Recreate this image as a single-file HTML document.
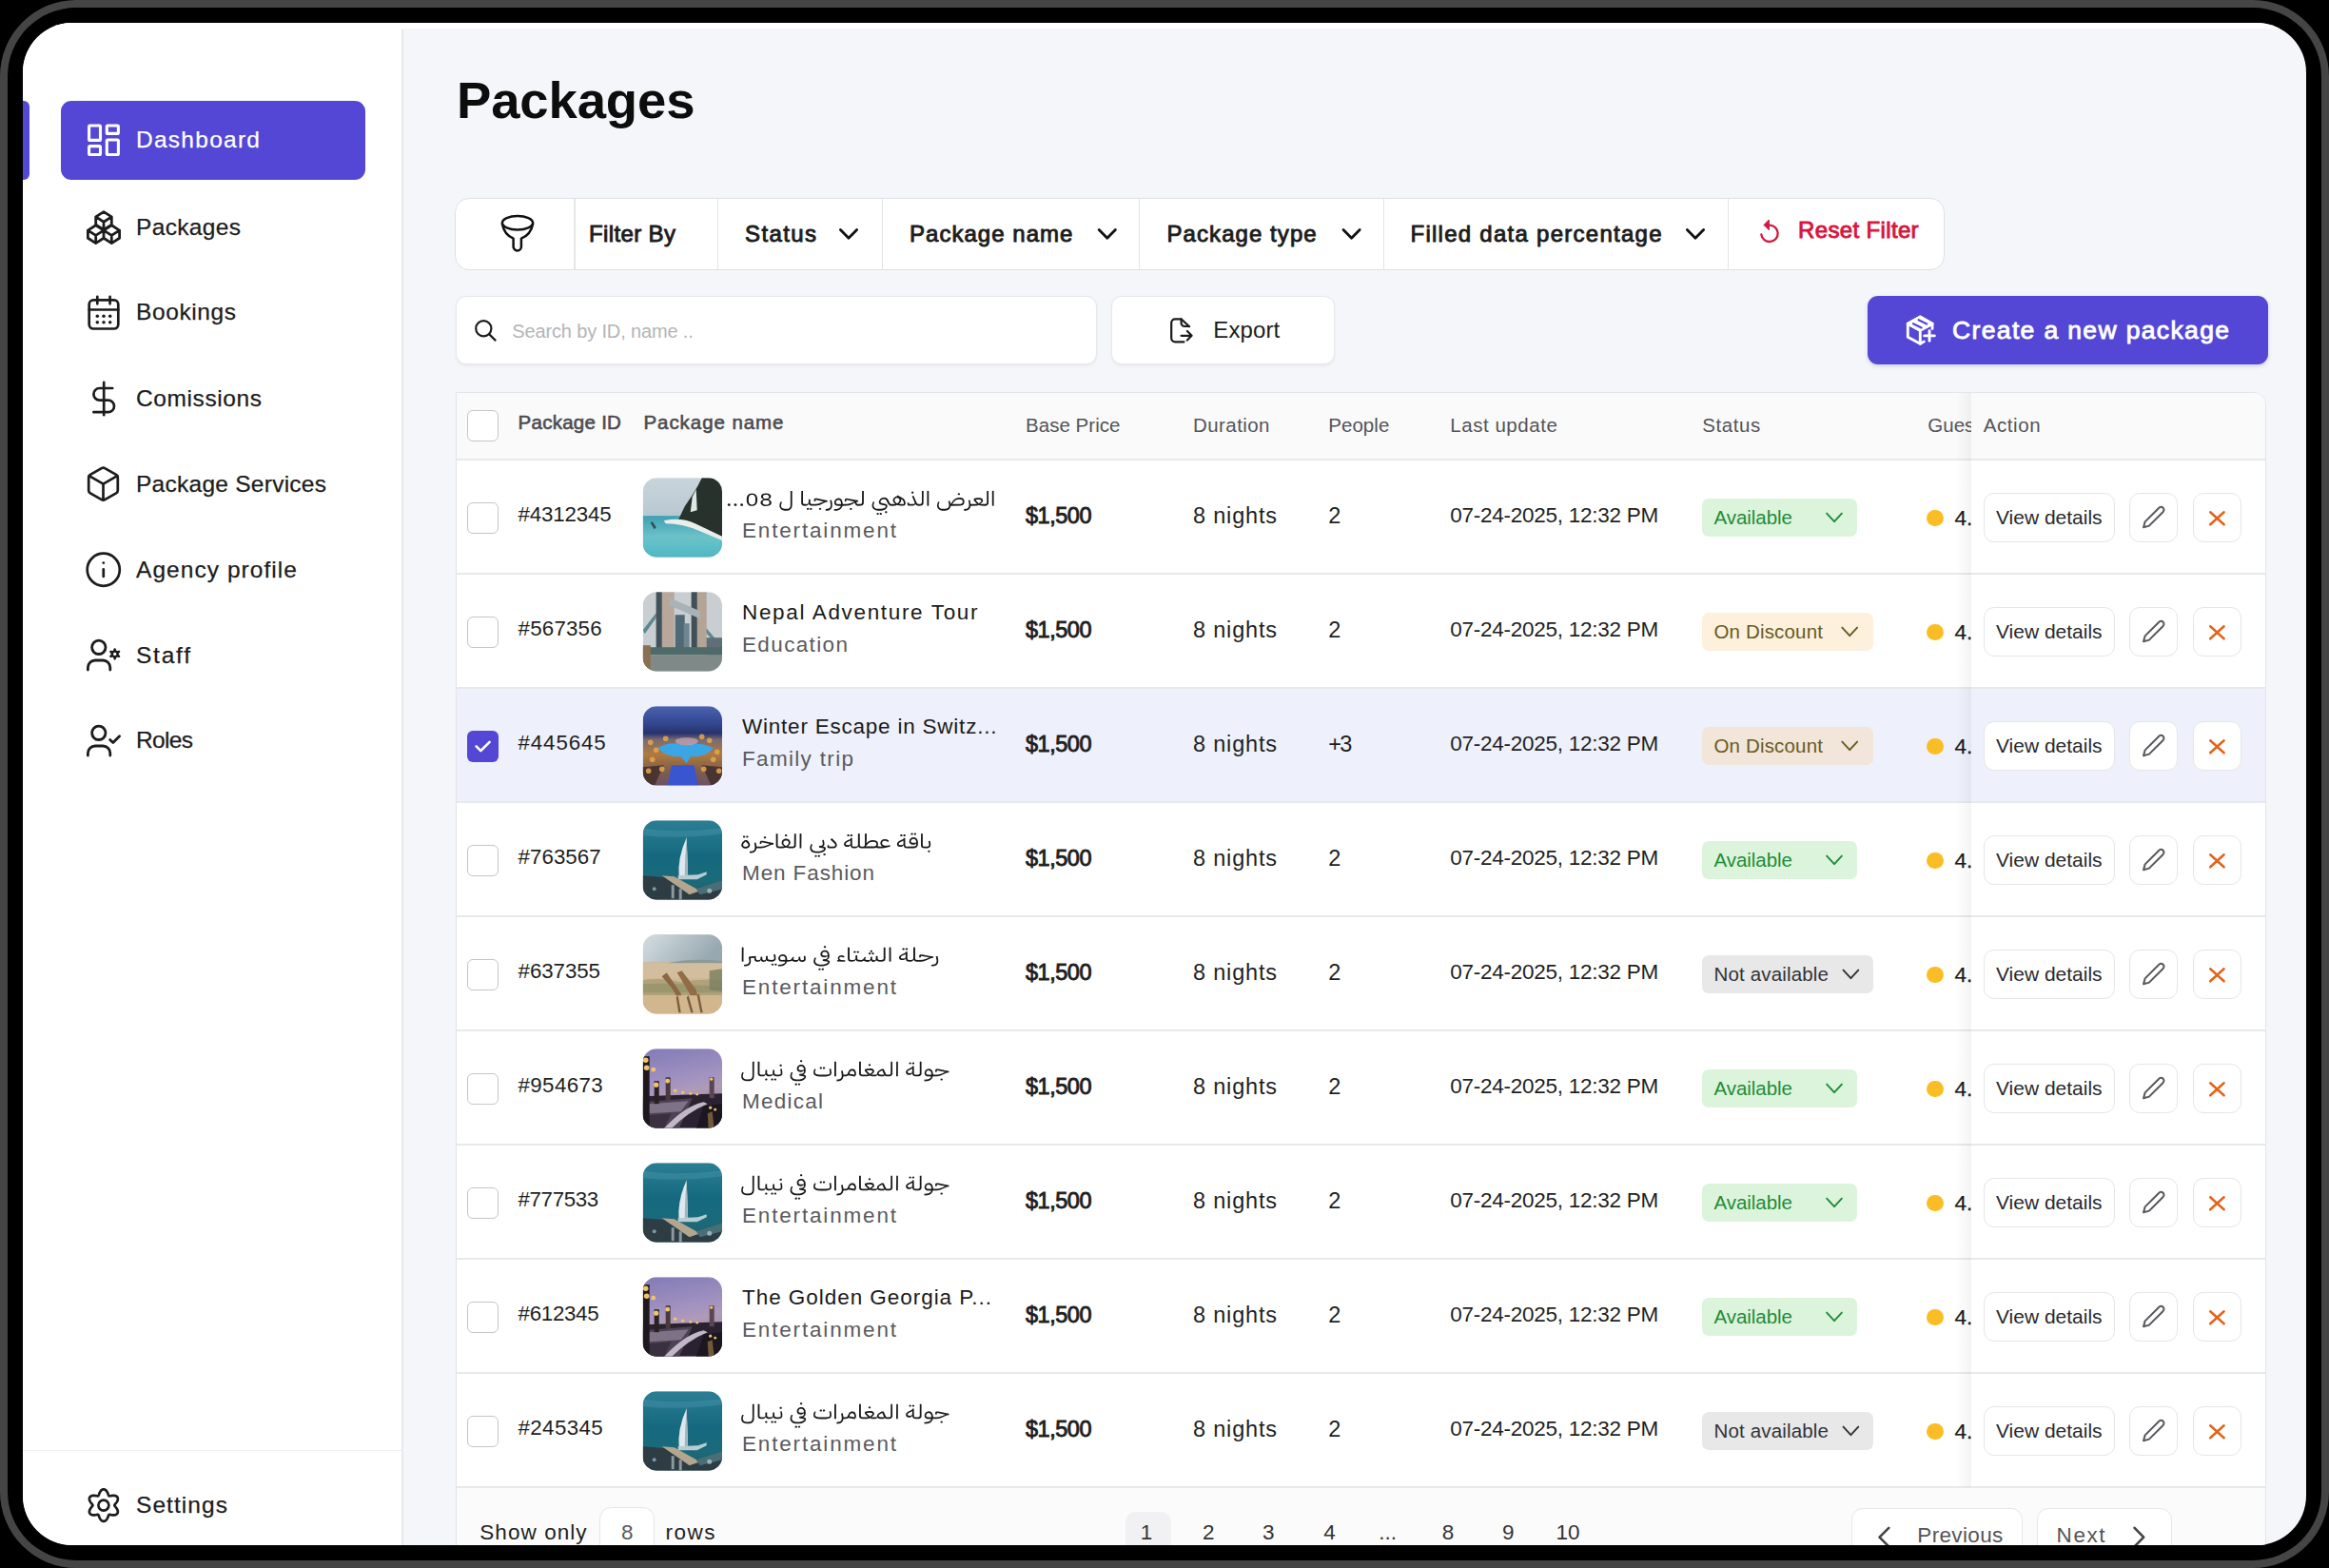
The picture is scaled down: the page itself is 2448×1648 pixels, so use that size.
<!DOCTYPE html>
<html><head><meta charset="utf-8"><title>Packages</title><style>
html,body{margin:0;padding:0;width:2448px;height:1648px;overflow:hidden;background:#000}
*{box-sizing:border-box}
#dev{position:absolute;left:0;top:0;width:2448px;height:1648px;border-radius:80px;background:#454545}
#bez{position:absolute;left:8px;top:8px;width:2432px;height:1632px;border-radius:72px;background:#000}
#scr{position:absolute;left:24px;top:24px;width:2400px;height:1600px;border-radius:52px;overflow:hidden;background:#f5f6fa;font-family:'Liberation Sans', sans-serif}
#in{position:absolute;left:-24px;top:-24px;width:2448px;height:1648px}
#ov{position:absolute;left:0;top:0;width:2448px;height:1648px}
</style></head><body><div id="dev"></div><div id="bez"></div><div id="scr"><div id="in">
<div style="position:absolute;left:24px;top:24px;width:398px;height:1600px;background:#fff"></div>
<div style="position:absolute;left:24px;top:24px;width:2400px;height:6px;background:#fff"></div>
<div style="position:absolute;left:422.3px;top:30.5px;width:1.8px;height:1600px;background:#e7e8eb"></div>
<div style="position:absolute;left:24px;top:105.5px;width:6.6px;height:83.5px;background:#5447d6;border-radius:0 6px 6px 0"></div>
<div style="position:absolute;left:64.3px;top:105.5px;width:319.5px;height:83.5px;background:#5447d6;border-radius:11px"></div>
<div style="position:absolute;left:24px;top:1523.8px;width:398px;height:1.5px;background:#eeeff1"></div>
<div style="position:absolute;left:478px;top:207.8px;width:1566px;height:76px;background:#fff;border:1.5px solid #dfe0e3;border-radius:15px"></div>
<div style="position:absolute;left:603.4px;top:209px;width:1.2px;height:73.5px;background:#e4e5e8"></div>
<div style="position:absolute;left:753.8px;top:209px;width:1.2px;height:73.5px;background:#e4e5e8"></div>
<div style="position:absolute;left:927.1px;top:209px;width:1.2px;height:73.5px;background:#e4e5e8"></div>
<div style="position:absolute;left:1197.2px;top:209px;width:1.2px;height:73.5px;background:#e4e5e8"></div>
<div style="position:absolute;left:1453.6000000000001px;top:209px;width:1.2px;height:73.5px;background:#e4e5e8"></div>
<div style="position:absolute;left:1815.7px;top:209px;width:1.2px;height:73.5px;background:#e4e5e8"></div>
<div style="position:absolute;left:478.5px;top:311.2px;width:674px;height:71.8px;background:#fff;border:1.5px solid #e7e8eb;border-radius:11px;box-shadow:0 1.5px 3px rgba(0,0,0,0.05)"></div>
<div style="position:absolute;left:1168px;top:311.2px;width:235px;height:71.8px;background:#fff;border:1.5px solid #e7e8eb;border-radius:11px;box-shadow:0 1.5px 3px rgba(0,0,0,0.05)"></div>
<div style="position:absolute;left:1962.5px;top:310.8px;width:421.5px;height:72.6px;background:#5447d6;border-radius:11px;box-shadow:0 2px 4px rgba(60,50,180,0.18)"></div>
<div style="position:absolute;left:478.5px;top:411.5px;width:1903.8000000000002px;height:1300px;background:#fff;border:1.6px solid #e4e5e8;border-radius:0 13px 0 0"></div>
<div style="position:absolute;left:480px;top:413px;width:1900.8000000000002px;height:69.8px;background:#fafafb;border-radius:0 12px 0 0"></div>
<div style="position:absolute;left:480px;top:482.3px;width:1900.8000000000002px;height:1.5px;background:#e8e9ec"></div>
<div style="position:absolute;left:491px;top:431px;width:33px;height:33px;border-radius:6px;background:#fff;border:1.8px solid #c6c6c9"></div>
<div style="position:absolute;left:480px;top:602.3px;width:1900.8000000000002px;height:1.5px;background:#e8e9ec"></div>
<div style="position:absolute;left:491px;top:527.8px;width:33px;height:33px;border-radius:6px;background:#fff;border:1.8px solid #c6c6c9"></div>
<div style="position:absolute;left:1789.2px;top:524px;width:162.8px;height:39.5px;border-radius:7px;background:#dcf4dc"></div>
<div style="position:absolute;left:2025px;top:535.8px;width:17.6px;height:17.6px;border-radius:50%;background:#fbbd26"></div>
<div style="position:absolute;left:480px;top:722.3px;width:1900.8000000000002px;height:1.5px;background:#e8e9ec"></div>
<div style="position:absolute;left:491px;top:647.8px;width:33px;height:33px;border-radius:6px;background:#fff;border:1.8px solid #c6c6c9"></div>
<div style="position:absolute;left:1789.2px;top:644px;width:179.8px;height:39.5px;border-radius:7px;background:rgba(248,205,138,0.3)"></div>
<div style="position:absolute;left:2025px;top:655.8px;width:17.6px;height:17.6px;border-radius:50%;background:#fbbd26"></div>
<div style="position:absolute;left:480px;top:723.8px;width:1900.8000000000002px;height:119px;background:#eef1fb"></div>
<div style="position:absolute;left:480px;top:842.3px;width:1900.8000000000002px;height:1.5px;background:#e8e9ec"></div>
<div style="position:absolute;left:491px;top:767.8px;width:33px;height:33px;border-radius:6px;background:#5447d6"></div>
<div style="position:absolute;left:1789.2px;top:764px;width:179.8px;height:39.5px;border-radius:7px;background:rgba(248,205,138,0.3)"></div>
<div style="position:absolute;left:2025px;top:775.8px;width:17.6px;height:17.6px;border-radius:50%;background:#fbbd26"></div>
<div style="position:absolute;left:480px;top:962.3px;width:1900.8000000000002px;height:1.5px;background:#e8e9ec"></div>
<div style="position:absolute;left:491px;top:887.8px;width:33px;height:33px;border-radius:6px;background:#fff;border:1.8px solid #c6c6c9"></div>
<div style="position:absolute;left:1789.2px;top:884px;width:162.8px;height:39.5px;border-radius:7px;background:#dcf4dc"></div>
<div style="position:absolute;left:2025px;top:895.8px;width:17.6px;height:17.6px;border-radius:50%;background:#fbbd26"></div>
<div style="position:absolute;left:480px;top:1082.3px;width:1900.8000000000002px;height:1.5px;background:#e8e9ec"></div>
<div style="position:absolute;left:491px;top:1007.8px;width:33px;height:33px;border-radius:6px;background:#fff;border:1.8px solid #c6c6c9"></div>
<div style="position:absolute;left:1789.2px;top:1004px;width:179.6px;height:39.5px;border-radius:7px;background:#e8e8e9"></div>
<div style="position:absolute;left:2025px;top:1015.8px;width:17.6px;height:17.6px;border-radius:50%;background:#fbbd26"></div>
<div style="position:absolute;left:480px;top:1202.3px;width:1900.8000000000002px;height:1.5px;background:#e8e9ec"></div>
<div style="position:absolute;left:491px;top:1127.8px;width:33px;height:33px;border-radius:6px;background:#fff;border:1.8px solid #c6c6c9"></div>
<div style="position:absolute;left:1789.2px;top:1124px;width:162.8px;height:39.5px;border-radius:7px;background:#dcf4dc"></div>
<div style="position:absolute;left:2025px;top:1135.8px;width:17.6px;height:17.6px;border-radius:50%;background:#fbbd26"></div>
<div style="position:absolute;left:480px;top:1322.3px;width:1900.8000000000002px;height:1.5px;background:#e8e9ec"></div>
<div style="position:absolute;left:491px;top:1247.8px;width:33px;height:33px;border-radius:6px;background:#fff;border:1.8px solid #c6c6c9"></div>
<div style="position:absolute;left:1789.2px;top:1244px;width:162.8px;height:39.5px;border-radius:7px;background:#dcf4dc"></div>
<div style="position:absolute;left:2025px;top:1255.8px;width:17.6px;height:17.6px;border-radius:50%;background:#fbbd26"></div>
<div style="position:absolute;left:480px;top:1442.3px;width:1900.8000000000002px;height:1.5px;background:#e8e9ec"></div>
<div style="position:absolute;left:491px;top:1367.8px;width:33px;height:33px;border-radius:6px;background:#fff;border:1.8px solid #c6c6c9"></div>
<div style="position:absolute;left:1789.2px;top:1364px;width:162.8px;height:39.5px;border-radius:7px;background:#dcf4dc"></div>
<div style="position:absolute;left:2025px;top:1375.8px;width:17.6px;height:17.6px;border-radius:50%;background:#fbbd26"></div>
<div style="position:absolute;left:480px;top:1562.3px;width:1900.8000000000002px;height:1.5px;background:#e8e9ec"></div>
<div style="position:absolute;left:491px;top:1487.8px;width:33px;height:33px;border-radius:6px;background:#fff;border:1.8px solid #c6c6c9"></div>
<div style="position:absolute;left:1789.2px;top:1484px;width:179.6px;height:39.5px;border-radius:7px;background:#e8e8e9"></div>
<div style="position:absolute;left:2025px;top:1495.8px;width:17.6px;height:17.6px;border-radius:50%;background:#fbbd26"></div>
<div style="position:absolute;left:2056px;top:413px;width:15.5px;height:1150px;background:linear-gradient(to right,rgba(0,0,0,0),rgba(0,0,0,0.03) 70%,rgba(0,0,0,0.045))"></div>
<div style="position:absolute;left:2084.7px;top:518.2px;width:138px;height:52px;border-radius:11px;background:#fff;border:1.5px solid #e5e6e9"></div>
<div style="position:absolute;left:2238.2px;top:518.2px;width:51px;height:52px;border-radius:11px;background:#fff;border:1.5px solid #e5e6e9"></div>
<div style="position:absolute;left:2304.5px;top:518.2px;width:51.7px;height:52px;border-radius:11px;background:#fff;border:1.5px solid #e5e6e9"></div>
<div style="position:absolute;left:2084.7px;top:638.2px;width:138px;height:52px;border-radius:11px;background:#fff;border:1.5px solid #e5e6e9"></div>
<div style="position:absolute;left:2238.2px;top:638.2px;width:51px;height:52px;border-radius:11px;background:#fff;border:1.5px solid #e5e6e9"></div>
<div style="position:absolute;left:2304.5px;top:638.2px;width:51.7px;height:52px;border-radius:11px;background:#fff;border:1.5px solid #e5e6e9"></div>
<div style="position:absolute;left:2084.7px;top:758.2px;width:138px;height:52px;border-radius:11px;background:#fff;border:1.5px solid #e5e6e9"></div>
<div style="position:absolute;left:2238.2px;top:758.2px;width:51px;height:52px;border-radius:11px;background:#fff;border:1.5px solid #e5e6e9"></div>
<div style="position:absolute;left:2304.5px;top:758.2px;width:51.7px;height:52px;border-radius:11px;background:#fff;border:1.5px solid #e5e6e9"></div>
<div style="position:absolute;left:2084.7px;top:878.2px;width:138px;height:52px;border-radius:11px;background:#fff;border:1.5px solid #e5e6e9"></div>
<div style="position:absolute;left:2238.2px;top:878.2px;width:51px;height:52px;border-radius:11px;background:#fff;border:1.5px solid #e5e6e9"></div>
<div style="position:absolute;left:2304.5px;top:878.2px;width:51.7px;height:52px;border-radius:11px;background:#fff;border:1.5px solid #e5e6e9"></div>
<div style="position:absolute;left:2084.7px;top:998.2px;width:138px;height:52px;border-radius:11px;background:#fff;border:1.5px solid #e5e6e9"></div>
<div style="position:absolute;left:2238.2px;top:998.2px;width:51px;height:52px;border-radius:11px;background:#fff;border:1.5px solid #e5e6e9"></div>
<div style="position:absolute;left:2304.5px;top:998.2px;width:51.7px;height:52px;border-radius:11px;background:#fff;border:1.5px solid #e5e6e9"></div>
<div style="position:absolute;left:2084.7px;top:1118.2px;width:138px;height:52px;border-radius:11px;background:#fff;border:1.5px solid #e5e6e9"></div>
<div style="position:absolute;left:2238.2px;top:1118.2px;width:51px;height:52px;border-radius:11px;background:#fff;border:1.5px solid #e5e6e9"></div>
<div style="position:absolute;left:2304.5px;top:1118.2px;width:51.7px;height:52px;border-radius:11px;background:#fff;border:1.5px solid #e5e6e9"></div>
<div style="position:absolute;left:2084.7px;top:1238.2px;width:138px;height:52px;border-radius:11px;background:#fff;border:1.5px solid #e5e6e9"></div>
<div style="position:absolute;left:2238.2px;top:1238.2px;width:51px;height:52px;border-radius:11px;background:#fff;border:1.5px solid #e5e6e9"></div>
<div style="position:absolute;left:2304.5px;top:1238.2px;width:51.7px;height:52px;border-radius:11px;background:#fff;border:1.5px solid #e5e6e9"></div>
<div style="position:absolute;left:2084.7px;top:1358.2px;width:138px;height:52px;border-radius:11px;background:#fff;border:1.5px solid #e5e6e9"></div>
<div style="position:absolute;left:2238.2px;top:1358.2px;width:51px;height:52px;border-radius:11px;background:#fff;border:1.5px solid #e5e6e9"></div>
<div style="position:absolute;left:2304.5px;top:1358.2px;width:51.7px;height:52px;border-radius:11px;background:#fff;border:1.5px solid #e5e6e9"></div>
<div style="position:absolute;left:2084.7px;top:1478.2px;width:138px;height:52px;border-radius:11px;background:#fff;border:1.5px solid #e5e6e9"></div>
<div style="position:absolute;left:2238.2px;top:1478.2px;width:51px;height:52px;border-radius:11px;background:#fff;border:1.5px solid #e5e6e9"></div>
<div style="position:absolute;left:2304.5px;top:1478.2px;width:51.7px;height:52px;border-radius:11px;background:#fff;border:1.5px solid #e5e6e9"></div>
<div style="position:absolute;left:480px;top:1563.5px;width:1900.8000000000002px;height:80px;background:#fbfbfc"></div>
<div style="position:absolute;left:630px;top:1584.3px;width:58px;height:60px;border-radius:12px;background:#fff;border:1.5px solid #e5e6e9"></div>
<div style="position:absolute;left:1182.7px;top:1588.7px;width:48.7px;height:60px;border-radius:11px;background:#f1f1f3"></div>
<div style="position:absolute;left:1945.9px;top:1584.7px;width:180px;height:60px;border-radius:12px;background:#fff;border:1.5px solid #e5e6e9"></div>
<div style="position:absolute;left:2141.2px;top:1584.7px;width:141.8px;height:60px;border-radius:12px;background:#fff;border:1.5px solid #e5e6e9"></div>
<svg id="ov" width="2448" height="1648" viewBox="0 0 2448 1648"><g fill="none" stroke-linecap="round" stroke-linejoin="round" stroke="#fff" stroke-width="3.1"><rect x="93.6" y="132" width="11.9" height="15.4" rx="1"/><rect x="112.3" y="132" width="12.1" height="8.4" rx="1"/><rect x="93.6" y="153.6" width="11.9" height="8.9" rx="1"/><rect x="112.3" y="147" width="12.1" height="15.5" rx="1"/></g>
<path fill="none" stroke-linecap="round" stroke-linejoin="round" stroke="#1c1c1c" stroke-width="2.8" d="M109 222.6 L117.3 227.9 L117.3 236.1 L109 241.39999999999998 L100.7 236.1 L100.7 227.9 Z M100.7 227.9 L109 233.2 L117.3 227.9 M109 233.2 V241.39999999999998 M100.7 236.8 L109.0 242.10000000000002 L109.0 250.3 L100.7 255.6 L92.4 250.3 L92.4 242.10000000000002 Z M92.4 242.10000000000002 L100.7 247.4 L109.0 242.10000000000002 M100.7 247.4 V255.6 M117.3 236.8 L125.6 242.10000000000002 L125.6 250.3 L117.3 255.6 L109.0 250.3 L109.0 242.10000000000002 Z M109.0 242.10000000000002 L117.3 247.4 L125.6 242.10000000000002 M117.3 247.4 V255.6"/>
<g fill="none" stroke-linecap="round" stroke-linejoin="round" stroke="#1c1c1c" stroke-width="2.7"><rect x="93.7" y="315.4" width="30.6" height="30.1" rx="4.5"/><path d="M102.3 311.8V319.3M115.6 311.8V319.3M93.7 325.5H124.3"/></g>
<circle cx="102.3" cy="332.2" r="1.75" fill="#1c1c1c"/>
<circle cx="102.3" cy="338.8" r="1.75" fill="#1c1c1c"/>
<circle cx="109" cy="332.2" r="1.75" fill="#1c1c1c"/>
<circle cx="109" cy="338.8" r="1.75" fill="#1c1c1c"/>
<circle cx="115.7" cy="332.2" r="1.75" fill="#1c1c1c"/>
<circle cx="115.7" cy="338.8" r="1.75" fill="#1c1c1c"/>
<g fill="none" stroke-linecap="round" stroke-linejoin="round" stroke="#1c1c1c" stroke-width="1.5" transform="translate(87.6 399) scale(1.8)"><line x1="12" x2="12" y1="1.6" y2="20.7"/><path d="M17 5H9.5a3.5 3.5 0 0 0 0 7h5a3.5 3.5 0 0 1 0 7H6"/></g>
<g fill="none" stroke-linecap="round" stroke-linejoin="round" stroke="#1c1c1c" stroke-width="1.6" transform="translate(88.1 488.2) scale(1.7)"><path d="M21 8a2 2 0 0 0-1-1.73l-7-4a2 2 0 0 0-2 0l-7 4A2 2 0 0 0 3 8v8a2 2 0 0 0 1 1.73l7 4a2 2 0 0 0 2 0l7-4A2 2 0 0 0 21 16Z"/><path d="m3.3 7 8.7 5 8.7-5"/><path d="M12 22V12"/></g>
<g fill="none" stroke-linecap="round" stroke-linejoin="round" stroke="#1c1c1c" stroke-width="1.6" transform="translate(88.3 578.3) scale(1.705)"><circle cx="12" cy="12" r="10"/><path d="M12 16.2v-4.4"/><path d="M12 7.8h.01"/></g>
<g fill="none" stroke-linecap="round" stroke-linejoin="round" stroke="#1c1c1c" stroke-width="2.8"><circle cx="103.8" cy="680.3" r="7.2"/><path d="M92.4 704 V701.6 a7.6 7.6 0 0 1 7.6-7.6 H108.2 a7.6 7.6 0 0 1 7.6 7.6 V704"/></g>
<path fill="#1c1c1c" fill-rule="evenodd" d="M120.70 681.10 L121.03 681.18 L121.33 681.39 L121.60 681.73 L121.82 682.13 L121.99 682.57 L122.13 682.98 L122.26 683.34 L122.38 683.62 L122.53 683.81 L122.70 683.94 L122.89 684.02 L123.13 684.05 L123.43 684.02 L123.81 683.95 L124.24 683.86 L124.70 683.80 L125.16 683.79 L125.59 683.85 L125.93 684.01 L126.16 684.25 L126.25 684.57 L126.22 684.94 L126.06 685.34 L125.82 685.74 L125.53 686.11 L125.24 686.43 L124.99 686.72 L124.81 686.97 L124.72 687.19 L124.70 687.40 L124.72 687.61 L124.81 687.83 L124.99 688.08 L125.24 688.37 L125.53 688.69 L125.82 689.06 L126.06 689.46 L126.22 689.86 L126.25 690.23 L126.16 690.55 L125.93 690.79 L125.59 690.95 L125.16 691.01 L124.70 691.00 L124.24 690.94 L123.81 690.85 L123.43 690.78 L123.13 690.75 L122.89 690.78 L122.70 690.86 L122.53 690.99 L122.38 691.18 L122.26 691.46 L122.13 691.82 L121.99 692.23 L121.82 692.67 L121.60 693.07 L121.33 693.41 L121.03 693.62 L120.70 693.70 L120.37 693.62 L120.07 693.41 L119.80 693.07 L119.58 692.67 L119.41 692.23 L119.27 691.82 L119.14 691.46 L119.02 691.18 L118.87 690.99 L118.70 690.86 L118.51 690.78 L118.27 690.75 L117.97 690.78 L117.59 690.85 L117.16 690.94 L116.70 691.00 L116.24 691.01 L115.81 690.95 L115.47 690.79 L115.24 690.55 L115.15 690.23 L115.18 689.86 L115.34 689.46 L115.58 689.06 L115.87 688.69 L116.16 688.37 L116.41 688.08 L116.59 687.83 L116.68 687.61 L116.70 687.40 L116.68 687.19 L116.59 686.97 L116.41 686.72 L116.16 686.43 L115.87 686.11 L115.58 685.74 L115.34 685.34 L115.18 684.94 L115.15 684.57 L115.24 684.25 L115.47 684.01 L115.81 683.85 L116.24 683.79 L116.70 683.80 L117.16 683.86 L117.59 683.95 L117.97 684.02 L118.27 684.05 L118.51 684.02 L118.70 683.94 L118.87 683.81 L119.02 683.62 L119.14 683.34 L119.27 682.98 L119.41 682.57 L119.58 682.13 L119.80 681.73 L120.07 681.39 L120.37 681.18Z M122.4 687.4 a1.7 1.7 0 1 0 -3.4 0 a1.7 1.7 0 1 0 3.4 0Z"/>
<g fill="none" stroke-linecap="round" stroke-linejoin="round" stroke="#1c1c1c" stroke-width="2.8"><circle cx="103.8" cy="770.3" r="7.2"/><path d="M92.4 794 V791.6 a7.6 7.6 0 0 1 7.6-7.6 H108.2 a7.6 7.6 0 0 1 7.6 7.6 V794"/><path d="M115.6 777.6 L118.8 780.6 L125.6 773.8"/></g>
<path fill="none" stroke-linecap="round" stroke-linejoin="round" stroke="#1c1c1c" stroke-width="2.7" d="M108.90 1565.30 L109.34 1565.33 L109.77 1565.43 L110.20 1565.59 L110.61 1565.81 L111.01 1566.08 L111.39 1566.41 L111.74 1566.78 L112.07 1567.19 L112.37 1567.63 L112.65 1568.09 L112.91 1568.57 L113.14 1569.06 L113.34 1569.55 L113.53 1570.03 L113.71 1570.49 L113.87 1570.93 L114.03 1571.34 L114.20 1571.70 L114.38 1572.00 L114.60 1572.23 L114.90 1572.30 L115.26 1572.31 L115.66 1572.27 L116.09 1572.21 L116.55 1572.13 L117.03 1572.05 L117.55 1571.98 L118.07 1571.91 L118.61 1571.87 L119.15 1571.85 L119.70 1571.85 L120.23 1571.90 L120.75 1571.98 L121.25 1572.10 L121.72 1572.26 L122.15 1572.47 L122.55 1572.72 L122.90 1573.01 L123.20 1573.34 L123.45 1573.70 L123.64 1574.10 L123.77 1574.52 L123.85 1574.97 L123.87 1575.44 L123.83 1575.92 L123.73 1576.41 L123.59 1576.90 L123.40 1577.39 L123.17 1577.87 L122.91 1578.35 L122.62 1578.81 L122.31 1579.25 L121.99 1579.67 L121.67 1580.08 L121.35 1580.46 L121.06 1580.82 L120.79 1581.16 L120.56 1581.49 L120.39 1581.80 L120.30 1582.10 L120.39 1582.40 L120.56 1582.71 L120.79 1583.04 L121.06 1583.38 L121.35 1583.74 L121.67 1584.12 L121.99 1584.53 L122.31 1584.95 L122.62 1585.39 L122.91 1585.85 L123.17 1586.33 L123.40 1586.81 L123.59 1587.30 L123.73 1587.79 L123.83 1588.28 L123.87 1588.76 L123.85 1589.23 L123.77 1589.68 L123.64 1590.10 L123.45 1590.50 L123.20 1590.86 L122.90 1591.19 L122.55 1591.48 L122.15 1591.73 L121.72 1591.94 L121.25 1592.10 L120.75 1592.22 L120.23 1592.30 L119.70 1592.35 L119.15 1592.35 L118.61 1592.33 L118.07 1592.29 L117.55 1592.22 L117.03 1592.15 L116.55 1592.07 L116.09 1591.99 L115.66 1591.93 L115.26 1591.89 L114.90 1591.90 L114.60 1591.97 L114.38 1592.20 L114.20 1592.50 L114.03 1592.86 L113.87 1593.27 L113.71 1593.71 L113.53 1594.17 L113.34 1594.65 L113.14 1595.14 L112.91 1595.63 L112.65 1596.11 L112.37 1596.57 L112.07 1597.01 L111.74 1597.42 L111.39 1597.79 L111.01 1598.12 L110.61 1598.39 L110.20 1598.61 L109.77 1598.77 L109.34 1598.87 L108.90 1598.90 L108.46 1598.87 L108.03 1598.77 L107.60 1598.61 L107.19 1598.39 L106.79 1598.12 L106.41 1597.79 L106.06 1597.42 L105.73 1597.01 L105.43 1596.57 L105.15 1596.11 L104.89 1595.63 L104.66 1595.14 L104.46 1594.65 L104.27 1594.17 L104.09 1593.71 L103.93 1593.27 L103.77 1592.86 L103.60 1592.50 L103.42 1592.20 L103.20 1591.97 L102.90 1591.90 L102.54 1591.89 L102.14 1591.93 L101.71 1591.99 L101.25 1592.07 L100.77 1592.15 L100.25 1592.22 L99.73 1592.29 L99.19 1592.33 L98.65 1592.35 L98.10 1592.35 L97.57 1592.30 L97.05 1592.22 L96.55 1592.10 L96.08 1591.94 L95.65 1591.73 L95.25 1591.48 L94.90 1591.19 L94.60 1590.86 L94.35 1590.50 L94.16 1590.10 L94.03 1589.68 L93.95 1589.23 L93.93 1588.76 L93.97 1588.28 L94.07 1587.79 L94.21 1587.30 L94.40 1586.81 L94.63 1586.33 L94.89 1585.85 L95.18 1585.39 L95.49 1584.95 L95.81 1584.53 L96.13 1584.12 L96.45 1583.74 L96.74 1583.38 L97.01 1583.04 L97.24 1582.71 L97.41 1582.40 L97.50 1582.10 L97.41 1581.80 L97.24 1581.49 L97.01 1581.16 L96.74 1580.82 L96.45 1580.46 L96.13 1580.08 L95.81 1579.67 L95.49 1579.25 L95.18 1578.81 L94.89 1578.35 L94.63 1577.87 L94.40 1577.39 L94.21 1576.90 L94.07 1576.41 L93.97 1575.92 L93.93 1575.44 L93.95 1574.97 L94.03 1574.52 L94.16 1574.10 L94.35 1573.70 L94.60 1573.34 L94.90 1573.01 L95.25 1572.72 L95.65 1572.47 L96.08 1572.26 L96.55 1572.10 L97.05 1571.98 L97.57 1571.90 L98.10 1571.85 L98.65 1571.85 L99.19 1571.87 L99.73 1571.91 L100.25 1571.98 L100.77 1572.05 L101.25 1572.13 L101.71 1572.21 L102.14 1572.27 L102.54 1572.31 L102.90 1572.30 L103.20 1572.23 L103.42 1572.00 L103.60 1571.70 L103.77 1571.34 L103.93 1570.93 L104.09 1570.49 L104.27 1570.03 L104.46 1569.55 L104.66 1569.06 L104.89 1568.57 L105.15 1568.09 L105.43 1567.63 L105.73 1567.19 L106.06 1566.78 L106.41 1566.41 L106.79 1566.08 L107.19 1565.81 L107.60 1565.59 L108.03 1565.43 L108.46 1565.33Z"/><circle cx="108.9" cy="1582.1" r="5.5" fill="none" stroke="#1c1c1c" stroke-width="2.7"/>
<g fill="none" stroke-linecap="round" stroke-linejoin="round" stroke="#111" stroke-width="2.5"><ellipse cx="544" cy="234.2" rx="16.1" ry="7.3"/><path d="M527.9 235.5 C529.5 243.5 534 248.5 539.6 250.6 V259.3 a4.15 4.15 0 0 0 8.3 0 V250.6 C553.5 248.5 558.5 243.5 560.1 235.5"/></g>
<path fill="none" stroke-linecap="round" stroke-linejoin="round" stroke="#111" stroke-width="2.8" d="M883.4 241.6 L892.0 250.3 L900.6 241.6"/>
<path fill="none" stroke-linecap="round" stroke-linejoin="round" stroke="#111" stroke-width="2.8" d="M1155.2 241.6 L1163.8 250.3 L1172.4 241.6"/>
<path fill="none" stroke-linecap="round" stroke-linejoin="round" stroke="#111" stroke-width="2.8" d="M1412 241.6 L1420.6 250.3 L1429.2 241.6"/>
<path fill="none" stroke-linecap="round" stroke-linejoin="round" stroke="#111" stroke-width="2.8" d="M1773.4 241.6 L1782.0 250.3 L1790.6000000000001 241.6"/>
<path fill="none" stroke-linecap="round" stroke-linejoin="round" stroke="#d01a40" stroke-width="2.3" d="M1851.3 246.3 A8.7 8.7 0 1 0 1859.6 236.6"/><path fill="#d01a40" stroke="#d01a40" stroke-width="1" stroke-linejoin="round" d="M1854 236.4 L1859.4 231 L1859.4 241.8Z"/>
<g fill="none" stroke-linecap="round" stroke-linejoin="round" stroke="#1c1c1c" stroke-width="2.2"><circle cx="508.3" cy="345.2" r="8.1"/><path d="M514.3 351.4 L520.6 357.6"/></g>
<g fill="none" stroke-linecap="round" stroke-linejoin="round" stroke="#1c1c1c" stroke-width="2.2"><path d="M1244.5 359.3 H1235.2 a4 4 0 0 1 -4 -4 V339.3 a4 4 0 0 1 4 -4 H1241.6 L1250 343.3"/><path d="M1241.6 335.3 V339.6 a3.4 3.4 0 0 0 3.4 3.4 H1250"/><path d="M1241.6 352.8 H1252.6 M1247.9 348 L1252.6 352.8 L1247.9 357.6"/></g>
<g fill="none" stroke-linecap="round" stroke-linejoin="round" stroke="#fff" stroke-width="2.9"><path d="M2031 345.5 V340.2 L2018.3 333 L2005.3 340.2 V354.2 L2018.3 361.2 L2022.3 359"/><path d="M2005.3 340.2 L2018.3 347.3 L2031 340.2 M2018.3 347.3 V361.2"/><path fill="#fff" d="M2018.3 333 L2031 340.2 L2018.3 347.3 L2005.3 340.2Z"/><path stroke="#5447d6" stroke-width="2.2" d="M2011 340.2 L2019.6 344.4 M2016.6 336.2 L2025.2 340.4"/><path d="M2028 347.6 V358.2 M2022.7 352.9 H2033.3"/></g>
<clipPath id="c0"><rect x="0" y="0" width="83.3" height="83.3" rx="14.5"/></clipPath><g transform="translate(675.7 502.2)" clip-path="url(#c0)"><defs><linearGradient id="bs" x1="0" y1="0" x2="0" y2="1"><stop offset="0" stop-color="#c9d5dc"/><stop offset="1" stop-color="#a5bac6"/></linearGradient><linearGradient id="bw" x1="0" y1="0" x2="0" y2="1"><stop offset="0" stop-color="#3f9fb0"/><stop offset="0.5" stop-color="#6cc2c9"/><stop offset="1" stop-color="#4db8c4"/></linearGradient></defs><rect width="84" height="84" fill="url(#bs)"/><rect y="40" width="84" height="44" fill="url(#bw)"/><path d="M36 47 L44 30 L52 18 L58 8 L62 0 L84 0 L84 64 L72 58 L55 50Z" fill="#26322b"/><path d="M22 45 Q40 41 55 48 L84 62 L84 66 L60 56 Q42 48 24 48Z" fill="#e9eeec"/><path d="M52 20 L56 12 L57 34 L50 36Z" fill="#dfe6e6"/><path d="M10 46 L14 52 L12 54 L8 47Z" fill="#2f4b55"/></g>
<path fill="#1a1a1a" fill-rule="nonzero" transform="translate(764.9 516.0) scale(1.0707 0.9284)" d="M58.50 22.32 55.50 22.30 53.50 21.63 52.37 20.75 51.47 19.50 50.93 17.75 50.90 15.75 51.17 14.25 52.00 12.11 53.27 12.50 52.42 15.50 52.41 17.25 52.93 18.75 54.00 19.77 55.50 20.26 58.25 20.29 59.50 20.08 60.75 19.16 61.33 18.00 61.58 16.00 61.59 0.00 63.00 -0.12 63.29 0.00 63.29 15.50 63.08 17.75 62.55 19.50 61.73 20.75 60.25 21.75 58.50 22.32ZM86.75 16.79 82.00 16.77 80.75 16.30 79.94 15.50 79.50 14.66 78.60 16.25 77.25 16.79 75.50 16.85 74.00 16.60 72.75 15.73 72.38 15.00 72.16 13.50 72.25 -0.10 73.87 0.00 73.87 13.25 73.96 14.00 74.50 14.63 75.00 14.83 77.50 14.87 78.25 14.75 79.00 14.25 79.36 13.25 79.50 9.34 80.99 9.50 81.19 14.00 81.75 14.57 82.75 14.86 86.25 14.84 88.25 14.56 91.25 13.57 94.36 12.00 86.50 10.07 86.30 10.25 86.25 11.84 84.75 11.94 84.79 9.50 85.24 8.75 85.75 8.41 87.75 8.40 94.00 10.03 97.87 10.75 97.75 12.58 96.00 12.61 90.50 15.78 89.25 16.28 86.75 16.79ZM107.25 22.25 104.50 22.38 104.41 20.50 107.00 20.35 109.00 19.76 110.50 18.41 111.11 17.00 106.75 16.65 106.00 16.27 105.24 15.50 104.67 14.25 104.68 12.00 105.18 10.50 106.25 9.15 107.28 8.50 108.75 8.18 110.00 8.43 110.96 9.00 111.84 10.00 112.32 11.00 113.00 14.88 116.50 14.83 118.25 14.59 121.25 13.61 124.47 12.00 116.50 10.06 116.25 12.00 115.00 12.00 114.82 11.75 115.00 9.26 115.75 8.50 116.75 8.27 125.50 10.33 127.75 10.58 127.99 10.75 127.91 12.50 126.25 12.75 126.62 14.25 127.50 14.84 130.75 14.73 131.65 14.00 131.87 13.00 131.88 0.00 133.60 0.00 133.56 13.50 133.33 14.75 132.50 16.04 130.75 16.82 128.00 16.84 126.75 16.61 125.50 15.74 124.75 13.42 121.50 15.33 119.25 16.32 116.50 16.83 112.75 16.88 111.80 19.25 110.50 20.83 109.25 21.64 107.25 22.25ZM189.50 16.80 187.25 16.87 185.75 16.54 184.98 16.00 184.25 14.91 183.40 16.25 182.25 16.83 177.75 16.82 177.07 16.50 176.43 15.75 176.34 13.25 177.91 13.25 178.00 14.84 182.25 14.88 183.50 14.46 183.55 13.25 181.01 6.25 181.01 6.00 182.50 5.42 185.43 13.25 186.00 14.18 187.00 14.88 189.25 14.79 190.00 14.40 190.36 14.00 190.59 12.75 190.59 0.00 192.00 -0.12 192.28 0.00 192.16 14.00 191.82 15.25 191.25 15.94 190.75 16.36 189.50 16.80ZM197.25 16.88 195.72 16.75 195.72 0.00 196.00 -0.14 197.41 0.00 197.41 16.75 197.25 16.88ZM234.00 22.27 232.00 22.33 231.92 20.75 232.00 20.47 234.00 20.32 235.25 19.84 236.58 18.25 236.92 15.75 236.81 13.75 236.25 10.75 236.50 10.51 237.75 10.31 237.86 10.50 238.50 14.82 244.75 14.85 241.65 10.75 241.65 9.00 242.50 8.45 244.25 7.92 246.25 7.76 248.00 7.92 249.90 9.00 250.36 9.75 250.59 11.00 250.03 12.75 247.81 14.75 252.50 14.86 253.25 14.73 253.97 14.25 254.28 13.75 254.38 12.75 254.38 0.00 256.00 -0.10 256.08 13.25 255.83 14.75 255.04 16.00 254.00 16.61 253.00 16.84 248.75 16.82 246.25 15.86 244.75 16.60 243.75 16.83 238.50 16.90 238.01 19.00 237.02 20.75 235.50 21.85 234.00 22.27ZM261.00 16.88 259.56 16.75 259.56 0.00 259.75 -0.14 261.22 0.00 261.22 16.75 261.00 16.88ZM182.00 2.86 181.00 2.88 180.43 2.50 180.39 1.25 180.75 0.85 181.50 0.67 182.33 1.00 182.56 2.00 182.00 2.86ZM227.50 4.60 226.50 4.64 225.90 4.25 225.87 3.00 226.25 2.58 227.00 2.42 227.80 2.75 228.02 3.75 227.50 4.60ZM25.00 17.02 22.75 17.03 21.25 16.58 20.50 16.08 19.14 14.00 18.61 11.75 18.65 7.75 19.15 5.75 19.66 4.75 20.25 3.94 21.50 3.15 23.75 2.68 26.25 3.19 27.43 4.00 28.50 5.75 29.10 8.25 29.08 11.75 28.30 14.50 26.90 16.25 25.00 17.02ZM39.25 17.04 36.25 17.11 34.50 16.58 33.00 15.39 32.40 14.25 32.24 13.00 32.63 11.50 34.00 10.11 35.29 9.50 33.50 8.29 32.94 7.50 32.68 6.25 32.92 5.00 34.00 3.63 35.50 2.93 37.50 2.68 39.75 2.96 41.25 3.66 42.35 5.25 42.45 6.25 42.08 7.75 41.00 8.86 39.88 9.50 41.25 10.15 42.55 11.50 42.87 12.50 42.84 14.00 42.30 15.25 41.50 16.07 39.25 17.04ZM24.27 15.50 26.00 14.79 26.81 13.50 27.12 12.00 27.14 8.00 26.80 6.25 26.25 5.35 25.00 4.44 23.75 4.25 22.25 4.65 21.00 6.00 20.54 8.00 20.50 11.00 20.71 13.00 21.42 14.50 22.75 15.36 24.27 15.50ZM38.28 8.75 39.75 8.26 40.36 7.50 40.51 6.25 40.25 5.29 39.75 4.75 38.75 4.37 37.50 4.25 35.50 4.69 34.72 5.75 34.68 7.00 34.94 7.75 36.00 8.59 38.28 8.75ZM150.75 22.29 147.25 22.33 146.00 22.07 144.25 21.35 142.68 20.00 141.96 18.50 141.66 16.50 141.92 14.50 142.75 12.15 144.08 12.50 143.41 14.50 143.17 16.25 143.43 17.75 144.23 19.00 145.25 19.80 146.00 20.08 148.00 20.33 150.25 20.29 152.00 20.05 153.75 19.40 154.81 18.50 155.23 17.00 154.75 16.68 149.75 15.33 148.67 14.25 148.40 12.50 148.91 10.50 149.89 9.00 151.50 7.72 153.50 7.26 154.75 7.41 156.00 7.99 157.11 9.25 159.23 14.00 159.75 14.58 160.50 14.88 164.48 14.75 162.95 13.00 162.40 11.75 162.22 10.50 162.41 9.25 163.36 7.50 164.75 6.46 165.75 6.14 166.75 4.83 171.00 7.44 172.55 8.75 173.54 10.00 174.33 12.00 174.57 14.75 173.25 16.79 169.25 16.80 166.25 15.85 164.25 16.61 161.00 16.88 159.25 16.60 158.20 15.75 157.41 14.50 155.88 11.00 154.97 9.75 153.25 9.17 151.75 9.63 150.88 10.25 150.14 11.25 149.92 12.50 150.17 13.25 152.00 14.06 155.50 14.93 156.52 16.00 156.72 17.25 156.25 19.21 154.75 20.89 153.00 21.78 150.75 22.29ZM213.75 22.28 210.75 22.34 209.50 22.08 208.25 21.61 206.47 20.00 205.67 18.00 205.57 16.50 205.93 14.00 206.75 12.11 207.93 12.50 207.18 15.00 207.08 16.25 207.21 17.50 207.94 19.00 209.50 20.08 213.75 20.33 215.00 20.03 216.00 19.50 217.07 18.00 217.33 15.75 216.59 11.75 216.75 11.43 218.12 11.25 218.75 14.61 219.00 14.62 221.75 10.35 223.25 8.92 224.75 7.96 226.75 7.48 228.50 7.49 230.50 8.20 231.54 9.25 232.27 11.25 232.22 13.25 231.64 15.00 230.50 16.10 228.25 16.83 219.00 16.88 218.36 19.25 217.60 20.50 216.25 21.55 213.75 22.28ZM166.52 14.00 167.50 13.17 168.35 12.00 168.66 10.75 168.56 9.50 168.00 8.50 167.25 7.96 165.50 7.90 164.83 8.25 164.20 9.00 163.90 10.00 163.92 11.25 164.44 12.50 165.10 13.25 166.25 14.14 166.52 14.00ZM172.92 14.75 172.83 13.00 172.28 11.25 171.38 10.00 170.25 9.06 170.33 10.50 170.04 12.00 169.07 13.75 168.06 14.75 172.92 14.75ZM228.64 14.75 229.75 14.34 230.37 13.75 230.66 12.75 230.60 11.25 230.31 10.50 229.75 9.96 227.75 9.42 225.50 9.64 223.75 10.49 222.13 12.25 220.50 14.75 228.64 14.75ZM246.61 14.00 248.80 12.00 249.02 11.25 248.75 10.50 248.00 9.98 246.25 9.68 244.00 9.92 243.25 10.25 246.25 13.89 246.61 14.00ZM111.25 14.75 111.08 12.50 110.56 11.25 110.00 10.62 109.25 10.19 108.50 10.13 107.50 10.37 106.97 10.75 106.38 11.75 106.18 12.75 106.40 14.00 106.75 14.43 107.50 14.84 111.25 14.75ZM38.71 15.50 40.00 15.07 40.80 14.00 40.88 12.25 40.38 11.25 39.50 10.64 37.50 10.38 35.75 10.62 34.80 11.25 34.45 11.75 34.25 13.00 34.45 14.25 34.75 14.65 35.75 15.33 36.75 15.58 38.71 15.50ZM98.25 22.27 96.08 22.25 96.14 20.50 99.00 20.06 99.82 19.50 100.59 18.50 101.05 16.75 101.08 15.50 100.37 10.75 100.50 10.55 101.75 10.31 102.04 10.75 102.55 14.25 102.57 17.00 102.31 18.50 101.50 20.25 100.75 21.11 99.75 21.83 98.25 22.27ZM1.75 17.09 0.52 17.00 -0.09 16.25 -0.07 15.00 0.75 14.23 1.75 14.23 2.57 15.00 2.60 16.25 2.25 16.85 1.75 17.09ZM8.00 17.09 6.77 17.00 6.16 16.25 6.18 15.00 7.00 14.23 8.00 14.23 8.82 15.00 8.85 16.25 8.50 16.85 8.00 17.09ZM14.25 17.09 13.02 17.00 12.41 16.25 12.43 15.00 13.25 14.23 14.25 14.23 15.07 15.00 15.10 16.25 14.75 16.85 14.25 17.09ZM79.25 21.36 78.50 21.46 77.70 21.00 77.62 20.00 78.00 19.40 78.75 19.25 79.54 19.50 79.81 20.00 79.81 20.75 79.25 21.36ZM82.25 21.35 81.50 21.47 80.67 21.00 80.60 20.00 81.00 19.38 81.75 19.26 82.50 19.51 82.81 20.50 82.25 21.35ZM91.25 21.38 90.25 21.38 89.75 20.96 89.65 20.00 90.00 19.42 91.00 19.28 91.75 19.75 91.85 20.75 91.25 21.38ZM121.50 21.34 120.75 21.48 119.89 21.00 119.81 20.00 120.25 19.37 121.25 19.31 121.87 19.75 121.94 20.75 121.50 21.34ZM156.00 25.03 155.00 25.10 154.42 24.75 154.36 23.50 154.79 23.00 155.75 22.90 156.29 23.25 156.53 24.00 156.35 24.75 156.00 25.03ZM148.00 26.83 147.25 27.00 146.41 26.75 146.13 25.75 146.50 24.92 147.25 24.75 148.08 25.00 148.37 26.00 148.00 26.83ZM151.00 26.80 150.25 27.00 149.39 26.75 149.11 25.75 149.50 24.90 150.25 24.75 151.05 25.00 151.35 26.00 151.00 26.80Z"/>
<path fill="none" stroke-linecap="round" stroke-linejoin="round" stroke="#1f8c37" stroke-width="1.9" d="M1920.1000000000001 539.6 L1928.0 548.2 L1935.9 539.6"/>
<clipPath id="c1"><rect x="0" y="0" width="83.3" height="83.3" rx="14.5"/></clipPath><g transform="translate(675.7 622.2)" clip-path="url(#c1)"><rect width="84" height="84" fill="#c9ced3"/><path d="M0 40 L20 14 L22 16 L2 44Z M60 30 L84 58 L84 62 L58 34Z" fill="#5b8a90"/><rect x="34" y="24" width="10" height="42" fill="#4f6a76"/><rect x="43" y="33" width="6" height="33" fill="#6f8590"/><rect x="66" y="48" width="18" height="20" fill="#5e6f78"/><rect x="14" y="0" width="19" height="82" fill="#b8a79a"/><rect x="14" y="0" width="6" height="62" fill="#41535c"/><rect x="51" y="0" width="16" height="82" fill="#b3a496"/><rect x="51" y="0" width="6" height="62" fill="#3f5058"/><path d="M28 6 L60 20 L60 28 L28 14Z" fill="#a9b2b5"/><rect x="0" y="58" width="84" height="8" fill="#4f6a6a"/><rect x="0" y="66" width="84" height="18" fill="#7f8a88"/><rect x="0" y="56" width="8" height="28" fill="#8a7050"/></g>
<path fill="none" stroke-linecap="round" stroke-linejoin="round" stroke="#6a5a22" stroke-width="1.9" d="M1936.3000000000002 659.6 L1944.2 668.2 L1952.1000000000001 659.6"/>
<path fill="none" stroke-linecap="round" stroke-linejoin="round" stroke="#fff" stroke-width="2.6" d="M500.6 784.4 L505.3 789.0999999999999 L514.6 779.8"/>
<clipPath id="c2"><rect x="0" y="0" width="83.3" height="83.3" rx="14.5"/></clipPath><g transform="translate(675.7 742.2)" clip-path="url(#c2)"><defs><linearGradient id="ns" x1="0" y1="0" x2="0" y2="1"><stop offset="0" stop-color="#4a62b2"/><stop offset="0.22" stop-color="#33468e"/><stop offset="0.34" stop-color="#26336e"/><stop offset="0.42" stop-color="#7a6a70"/><stop offset="0.6" stop-color="#b07a40"/><stop offset="0.8" stop-color="#80604a"/><stop offset="1" stop-color="#6a5068"/></linearGradient></defs><rect width="84" height="84" fill="url(#ns)"/><path d="M16 44 Q28 36 44 41 Q60 37 74 44 Q66 54 50 53 L46 60 L40 53 Q24 54 16 44Z" fill="#3aa6e6"/><ellipse cx="46" cy="37" rx="12" ry="4" fill="#c8a8b8" opacity="0.7"/><path d="M30 62 L54 62 L58 83 L26 83Z" fill="#3a55d0"/><path d="M0 64 L22 62 L12 84 L0 84Z" fill="#4a3430"/><path d="M84 64 L62 62 L72 84 L84 84Z" fill="#4a3430"/><circle cx="8" cy="38" r="2.8" fill="#e8a64a" opacity="0.85"/><circle cx="14" cy="46" r="2.8" fill="#e8a64a" opacity="0.85"/><circle cx="70" cy="36" r="2.8" fill="#e8a64a" opacity="0.85"/><circle cx="78" cy="48" r="2.8" fill="#e8a64a" opacity="0.85"/><circle cx="10" cy="56" r="2.8" fill="#e8a64a" opacity="0.85"/><circle cx="74" cy="56" r="2.8" fill="#e8a64a" opacity="0.85"/><circle cx="24" cy="34" r="2.8" fill="#e8a64a" opacity="0.85"/><circle cx="62" cy="32" r="2.8" fill="#e8a64a" opacity="0.85"/><circle cx="6" cy="68" r="2.8" fill="#e8a64a" opacity="0.85"/><circle cx="80" cy="68" r="2.8" fill="#e8a64a" opacity="0.85"/><circle cx="20" cy="66" r="2.8" fill="#e8a64a" opacity="0.85"/><circle cx="64" cy="66" r="2.8" fill="#e8a64a" opacity="0.85"/></g>
<path fill="none" stroke-linecap="round" stroke-linejoin="round" stroke="#6a5a22" stroke-width="1.9" d="M1936.3000000000002 779.6 L1944.2 788.2 L1952.1000000000001 779.6"/>
<clipPath id="c3"><rect x="0" y="0" width="83.3" height="83.3" rx="14.5"/></clipPath><g transform="translate(675.7 862.2)" clip-path="url(#c3)"><defs><linearGradient id="us" x1="0" y1="0" x2="0" y2="1"><stop offset="0" stop-color="#2b7e94"/><stop offset="0.45" stop-color="#15697f"/><stop offset="0.75" stop-color="#1a6a7a"/><stop offset="1" stop-color="#2a5a66"/></linearGradient></defs><rect width="84" height="84" fill="url(#us)"/><path d="M0 8 Q30 14 84 8 L84 14 Q40 20 0 16Z" fill="#4a94a8" opacity="0.45"/><path d="M46 18 L47.5 60 L38 60 Q36 40 46 18Z" fill="#dfe8ec"/><path d="M46 18 L47.5 60 L44 60 Q44 40 46 18Z" fill="#9fb8c0"/><path d="M37 58 L58 57 L67 54 L67 57 L57 62 L37 62Z" fill="#b8ccd2"/><path d="M0 58 L24 60 L56 76 L84 70 L84 84 L0 84Z" fill="#2e3c44"/><path d="M20 58 L33 59 L60 74 L49 78Z" fill="#b4a68e"/><path d="M56 72 L84 63 L84 72 L60 78Z" fill="#4a6e76"/><rect x="30" y="68" width="3" height="14" fill="#8a9aa0"/><rect x="38" y="72" width="3" height="12" fill="#8a9aa0"/><circle cx="70" cy="74" r="2.5" fill="#9ab0b8"/><circle cx="12" cy="72" r="2" fill="#7a9aa6"/></g>
<path fill="#1a1a1a" fill-rule="nonzero" transform="translate(779.3 875.5) scale(1.1056 0.9107)" d="M162.75 2.08 161.50 2.10 161.13 1.75 160.98 1.00 161.25 0.22 162.25 -0.07 163.00 0.26 163.21 1.25 162.75 2.08ZM165.75 2.07 164.50 2.11 164.11 1.75 163.94 1.00 164.25 0.17 165.25 -0.07 166.00 0.31 166.15 1.50 165.75 2.07ZM49.25 17.54 45.50 17.57 42.50 16.61 39.25 17.57 36.00 17.59 34.75 17.36 33.67 16.75 33.15 16.00 32.89 14.75 32.86 0.75 34.57 0.75 34.57 14.00 34.65 14.75 34.98 15.25 36.50 15.62 40.62 15.50 39.19 14.00 38.43 12.50 38.24 11.00 38.42 9.75 38.95 8.50 40.00 7.38 41.50 6.68 42.50 6.62 44.00 6.90 44.91 7.50 45.84 8.50 46.47 10.25 46.55 11.25 46.06 13.25 44.16 15.50 47.50 15.64 49.00 15.53 49.75 15.12 50.13 14.50 50.27 0.75 51.94 0.75 51.83 15.00 51.00 16.65 50.50 17.09 49.25 17.54ZM57.00 17.62 55.40 17.50 55.40 0.75 55.75 0.61 57.12 0.75 57.00 17.62ZM134.25 17.51 129.75 17.61 128.25 16.91 127.00 17.36 125.25 17.61 113.75 17.55 112.25 17.09 111.39 16.25 111.00 15.42 110.30 16.75 109.50 17.32 108.25 17.58 106.50 17.56 105.25 17.28 104.16 16.25 103.75 13.94 103.00 15.07 101.75 15.82 100.00 15.88 99.00 15.60 98.23 15.00 97.75 14.23 97.49 12.50 97.95 11.00 98.82 10.00 100.25 8.90 103.50 7.06 103.75 5.83 105.00 5.75 105.30 6.00 105.31 14.00 105.50 14.97 106.25 15.52 107.25 15.62 109.50 15.55 110.25 15.16 110.61 14.75 110.83 13.75 110.84 0.75 112.25 0.62 112.53 0.75 112.63 14.50 113.00 15.12 113.75 15.53 116.50 15.60 117.37 14.00 117.37 0.75 118.75 0.62 119.08 0.75 119.08 9.00 118.84 11.50 119.00 11.63 120.51 10.00 122.75 8.64 125.25 8.17 127.00 8.42 128.75 9.44 129.61 10.75 129.96 12.75 129.59 15.50 133.75 15.62 133.93 15.50 133.16 14.75 132.42 13.50 132.08 11.75 132.41 9.75 133.21 8.50 134.50 7.47 136.50 7.09 138.25 7.43 139.83 8.50 140.18 9.25 139.25 10.38 137.25 9.14 135.50 9.16 134.75 9.46 133.88 10.50 133.70 12.25 134.50 13.63 136.00 14.56 138.50 14.61 141.25 14.11 141.59 15.75 137.00 17.05 134.25 17.51ZM176.75 17.51 174.25 17.61 172.50 17.35 171.50 16.76 170.88 15.75 170.65 14.00 170.75 0.65 172.37 0.75 172.37 14.00 172.46 14.75 172.82 15.25 173.50 15.58 176.25 15.62 177.50 15.35 177.98 15.00 178.33 14.25 178.34 13.25 177.74 9.25 179.35 9.00 179.87 13.00 179.86 14.50 179.60 15.50 179.25 16.14 178.25 17.07 176.75 17.51ZM42.75 3.82 42.00 3.81 41.33 3.25 41.34 2.25 41.75 1.74 42.75 1.65 43.33 2.00 43.43 3.25 42.75 3.82ZM102.00 3.80 101.25 3.83 100.51 3.25 100.53 2.25 101.00 1.70 102.00 1.66 102.63 2.25 102.64 3.25 102.00 3.80ZM105.00 3.79 104.25 3.84 103.46 3.25 103.48 2.25 104.00 1.69 105.00 1.66 105.61 2.25 105.62 3.25 105.00 3.79ZM152.50 3.77 151.75 3.85 150.92 3.25 150.94 2.25 151.50 1.68 152.50 1.67 153.08 2.25 153.10 3.25 152.50 3.77ZM155.25 3.84 154.50 3.78 153.90 3.25 153.91 2.25 154.50 1.67 155.50 1.68 156.05 2.25 156.07 3.25 155.25 3.84ZM3.00 5.36 2.25 5.37 1.63 5.00 1.45 4.25 1.75 3.43 2.75 3.18 3.50 3.55 3.65 4.75 3.00 5.36ZM6.00 5.35 5.25 5.38 4.61 5.00 4.42 4.25 4.75 3.41 5.75 3.18 6.60 3.75 6.63 4.75 6.00 5.35ZM22.75 6.34 21.75 6.30 21.37 6.00 21.21 5.00 21.75 4.20 22.75 4.16 23.38 4.75 23.31 6.00 22.75 6.34ZM164.25 17.57 157.75 17.61 155.75 17.31 154.62 16.25 154.21 14.25 154.00 14.11 153.50 15.00 152.25 15.79 150.00 15.81 149.00 15.32 148.18 14.25 147.90 12.75 148.14 11.50 148.97 10.25 150.25 9.19 154.00 7.00 154.25 5.75 155.50 5.75 155.71 6.00 155.71 14.00 156.15 15.25 156.75 15.55 157.75 15.62 164.50 15.49 165.44 15.00 166.02 14.25 166.25 11.92 165.00 13.05 164.25 13.33 162.50 13.38 161.50 13.11 160.00 11.91 159.68 11.25 159.49 9.75 159.97 7.50 161.29 5.75 162.25 5.22 163.50 4.95 165.00 5.20 166.25 6.03 167.35 7.75 167.84 10.00 167.85 13.00 167.60 14.50 166.81 16.25 165.75 17.08 164.25 17.57ZM88.00 17.53 83.00 17.55 82.09 17.00 81.70 16.25 81.75 13.88 83.23 14.00 83.23 15.50 83.50 15.62 87.75 15.60 88.50 15.35 89.09 14.50 89.11 13.25 88.66 12.25 84.69 7.75 84.63 7.50 86.00 6.17 89.84 10.75 90.75 13.26 90.73 14.75 90.29 16.00 89.25 17.09 88.00 17.53ZM165.35 11.25 165.98 11.00 166.28 10.50 166.02 9.00 165.35 7.75 164.74 7.25 163.75 6.94 162.50 7.13 162.00 7.42 161.17 8.75 161.17 10.25 161.44 10.75 162.50 11.35 165.35 11.25ZM74.25 23.03 70.50 23.04 68.25 22.38 67.00 21.60 66.18 20.75 65.39 19.00 65.16 17.25 65.42 15.25 66.25 12.90 67.58 13.25 66.72 16.25 66.75 17.75 67.50 19.47 68.75 20.55 70.75 21.03 74.00 21.02 75.50 20.79 77.50 19.84 78.35 19.00 78.62 17.75 74.00 16.73 73.79 16.50 73.79 15.00 74.00 14.75 76.25 14.57 77.09 14.00 77.35 12.25 76.81 8.25 78.25 7.94 78.82 11.25 78.86 13.50 78.53 14.50 77.64 15.50 77.81 15.75 79.25 16.15 80.00 16.82 80.23 17.75 80.08 19.00 79.08 20.75 78.00 21.64 76.00 22.60 74.25 23.03ZM4.75 17.77 3.00 17.79 1.75 17.29 0.43 16.00 -0.04 14.75 -0.07 13.75 0.42 11.75 1.15 10.50 3.25 8.17 5.25 8.28 6.80 10.00 8.05 12.75 8.09 14.50 7.58 16.00 6.25 17.30 4.75 17.77ZM42.70 14.75 44.18 13.50 44.61 12.75 44.91 11.50 44.79 10.25 44.25 9.31 43.48 8.75 41.50 8.67 40.59 9.25 40.11 10.00 39.86 11.25 39.97 12.25 40.41 13.25 41.34 14.25 42.25 14.86 42.70 14.75ZM102.71 13.75 103.38 13.25 103.59 12.75 103.66 9.00 103.50 8.86 100.25 10.67 99.15 12.00 99.14 13.00 99.50 13.58 100.00 13.84 101.00 13.99 102.71 13.75ZM153.14 13.75 153.84 13.25 154.08 12.50 154.00 8.83 150.75 10.64 149.62 12.00 149.60 13.00 150.00 13.63 151.50 13.99 153.14 13.75ZM9.75 23.04 7.83 23.00 7.83 21.50 8.00 21.17 10.75 20.81 11.57 20.25 12.34 19.25 12.84 16.50 12.25 11.30 13.50 11.06 13.72 11.25 14.50 15.62 18.75 15.60 21.00 15.31 24.00 14.32 27.11 12.75 19.25 10.82 19.05 11.00 19.00 12.59 17.50 12.69 17.54 10.25 17.99 9.50 18.50 9.16 20.50 9.15 26.75 10.78 30.62 11.50 30.50 13.33 28.75 13.36 22.50 16.85 19.25 17.57 14.50 17.62 13.79 20.00 12.88 21.50 11.50 22.53 9.75 23.04ZM4.87 15.75 5.75 15.35 6.28 14.75 6.52 13.50 6.09 12.25 4.00 9.85 1.90 12.25 1.57 14.00 2.00 15.00 2.75 15.61 3.75 15.88 4.87 15.75ZM126.31 15.50 127.50 15.04 128.05 14.50 128.35 13.50 128.33 12.25 128.10 11.50 127.45 10.75 126.75 10.37 125.50 10.17 123.00 10.44 121.50 11.17 120.17 12.50 118.15 15.50 126.31 15.50ZM179.00 22.03 178.25 22.25 177.33 21.75 177.15 21.00 177.50 20.20 178.25 20.00 179.11 20.25 179.39 21.25 179.00 22.03ZM79.50 25.78 78.50 25.85 77.92 25.50 77.86 24.25 78.29 23.75 79.25 23.65 79.79 24.00 80.03 24.75 79.85 25.50 79.50 25.78ZM71.50 27.58 70.75 27.75 69.91 27.50 69.63 26.50 70.00 25.67 70.75 25.50 71.58 25.75 71.87 26.75 71.50 27.58ZM74.50 27.55 73.75 27.75 72.89 27.50 72.61 26.50 73.00 25.65 73.75 25.50 74.55 25.75 74.85 26.75 74.50 27.55Z"/>
<path fill="none" stroke-linecap="round" stroke-linejoin="round" stroke="#1f8c37" stroke-width="1.9" d="M1920.1000000000001 899.6 L1928.0 908.2 L1935.9 899.6"/>
<clipPath id="c4"><rect x="0" y="0" width="83.3" height="83.3" rx="14.5"/></clipPath><g transform="translate(675.7 982.2)" clip-path="url(#c4)"><defs><linearGradient id="gs" x1="0" y1="0" x2="1" y2="0.3"><stop offset="0" stop-color="#d4dfe3"/><stop offset="1" stop-color="#98a8b0"/></linearGradient></defs><rect width="84" height="84" fill="#d0b794"/><rect width="84" height="29" fill="url(#gs)"/><path d="M22 31 Q50 24 84 28 L84 31Z" fill="#8e9a98"/><rect y="30" width="84" height="16" fill="#d2bd9e"/><path d="M0 48 Q20 45 40 50 Q60 46 84 48 L84 64 L0 64Z" fill="#b0a27a"/><path d="M0 52 Q30 50 84 55 L84 61 L0 61Z" fill="#8f8d66" opacity="0.6"/><path d="M70 38 L84 36 L84 60 L70 58Z" fill="#7a8060" opacity="0.8"/><path d="M20 44 L25 40 L40 62 L45 80 L40 80 L36 66 L31 57Z" fill="#8a6844"/><path d="M36 40 L41 38 L56 58 L61 80 L56 80 L50 64 L45 55Z" fill="#926c46"/><rect y="64" width="84" height="20" fill="#d2b68e"/><path d="M37 64 L40 82 L37.5 82 L35 66Z M48 64 L53 82 L50.5 82 L46 66Z M59 62 L63 82 L60.5 82 L57 64Z" fill="#7d5d40"/></g>
<path fill="#1a1a1a" fill-rule="nonzero" transform="translate(779.8 994.4) scale(1.1274 0.8870)" d="M77.75 2.04 77.00 2.04 76.37 1.50 76.33 0.50 76.75 -0.09 78.00 -0.09 78.36 0.25 78.38 1.50 77.75 2.04ZM1.50 18.32 -0.14 18.25 0.00 1.36 1.57 1.50 1.50 18.32ZM123.50 18.55 122.00 18.59 121.25 18.28 120.49 17.50 120.00 16.41 119.00 18.10 117.50 18.61 115.75 18.34 113.50 17.17 112.25 18.04 111.25 18.30 108.50 18.25 107.29 17.75 106.00 16.21 105.25 17.65 104.00 18.26 101.75 18.33 100.00 17.84 99.14 17.00 98.73 15.00 98.72 1.50 100.41 1.50 100.41 14.75 100.64 15.75 101.00 16.11 101.75 16.35 104.00 16.38 104.75 16.28 105.50 15.84 105.85 15.25 105.92 14.50 105.93 11.00 107.25 10.83 107.58 11.00 107.65 15.25 108.00 15.84 108.75 16.28 111.50 16.38 112.50 16.00 113.02 15.50 114.50 12.71 115.68 13.25 115.72 13.50 114.66 15.50 114.83 15.75 116.50 16.54 118.75 16.54 119.50 15.96 119.81 15.25 119.87 12.75 121.25 12.62 121.45 12.75 121.45 14.50 121.74 16.00 122.25 16.55 123.25 16.67 124.25 16.50 124.79 15.75 124.95 12.00 125.25 11.75 126.25 11.75 126.59 12.00 126.67 15.25 127.25 16.00 128.00 16.32 130.00 16.38 131.00 16.23 131.75 15.72 132.03 15.25 132.13 14.25 132.13 1.50 133.75 1.40 133.85 14.25 133.37 16.75 132.75 17.54 131.75 18.11 128.75 18.37 126.50 17.87 125.72 17.25 125.25 16.41 124.59 18.00 123.50 18.55ZM138.75 18.38 137.31 18.25 137.31 1.50 137.50 1.36 138.97 1.50 138.97 18.25 138.75 18.38ZM167.25 18.30 163.75 18.37 161.75 18.05 160.50 17.14 160.00 16.17 159.30 17.50 158.50 18.07 156.50 18.38 154.50 18.11 153.16 17.00 152.75 14.69 152.00 15.82 150.75 16.57 148.50 16.54 147.25 15.77 146.65 14.75 146.46 13.50 146.69 12.25 147.25 11.34 148.50 10.16 152.57 7.75 152.75 6.58 154.00 6.50 154.30 6.75 154.31 14.75 154.50 15.72 155.50 16.34 158.00 16.36 159.14 16.00 159.61 15.50 159.83 14.50 159.84 1.50 161.25 1.38 161.53 1.50 161.55 14.50 161.73 15.50 162.25 16.05 164.25 16.39 168.75 16.08 171.75 15.10 174.91 13.50 167.00 11.55 166.75 13.46 165.50 13.50 165.23 13.25 165.35 11.00 165.82 10.25 166.50 9.87 168.25 9.89 174.75 11.58 178.41 12.25 178.25 14.08 176.50 14.14 171.00 17.32 169.75 17.81 167.25 18.30ZM151.00 4.55 150.25 4.58 149.51 4.00 149.53 3.00 150.00 2.45 151.00 2.41 151.63 3.00 151.64 4.00 151.00 4.55ZM154.00 4.54 153.25 4.59 152.46 4.00 152.48 3.00 153.00 2.44 154.00 2.41 154.61 3.00 154.62 4.00 154.00 4.54ZM76.00 23.75 72.25 23.81 70.50 23.35 69.00 22.58 67.41 20.75 66.94 19.25 66.92 17.00 67.66 14.25 68.00 13.61 68.25 13.65 69.27 14.00 68.44 16.75 68.48 18.75 69.18 20.25 70.50 21.33 72.50 21.79 75.75 21.77 77.75 21.33 79.61 20.25 80.29 19.25 80.32 18.50 75.75 17.49 75.45 17.25 75.45 15.75 75.75 15.50 78.25 15.33 79.25 14.76 79.86 13.75 80.00 11.90 78.25 13.11 77.00 13.32 75.50 13.09 74.75 12.80 73.67 11.75 73.22 10.00 73.45 8.00 74.19 6.50 74.87 5.75 76.50 4.93 78.25 4.91 79.00 5.17 80.12 6.00 81.34 8.50 81.62 11.50 81.31 14.00 80.75 15.14 79.39 16.25 79.50 16.50 81.00 16.92 81.65 17.50 81.87 18.00 81.84 19.50 81.33 20.75 79.75 22.36 77.75 23.33 76.00 23.75ZM121.00 7.08 120.25 7.05 119.64 6.50 119.64 5.50 120.25 4.97 121.00 4.95 121.66 5.50 121.66 6.50 121.00 7.08ZM105.50 8.05 104.75 8.02 104.16 7.50 104.12 6.50 104.50 5.95 105.75 5.89 106.28 6.50 106.09 7.75 105.50 8.05ZM108.50 8.05 107.75 8.03 107.14 7.50 107.10 6.50 107.50 5.93 108.75 5.90 109.12 6.25 109.27 7.25 109.06 7.75 108.50 8.05ZM78.39 11.25 79.46 11.00 80.01 10.50 79.61 8.50 79.00 7.57 78.20 7.00 77.25 6.83 76.25 6.99 75.50 7.53 74.96 8.50 74.92 10.25 75.25 10.75 76.00 11.15 78.39 11.25ZM119.75 9.80 118.75 9.84 118.20 9.50 118.12 8.25 118.55 7.75 119.50 7.64 120.11 8.00 120.30 9.00 119.75 9.80ZM122.75 9.78 121.75 9.85 121.17 9.50 121.10 8.25 121.50 7.75 122.50 7.65 123.09 8.00 123.25 8.97 123.11 9.50 122.75 9.78ZM4.00 23.78 2.00 23.88 1.92 22.00 4.75 21.59 5.62 21.00 6.38 20.00 6.83 18.50 6.88 17.50 6.31 12.75 6.50 12.61 13.00 11.79 13.17 15.00 13.41 15.75 14.00 16.35 15.25 16.66 16.25 16.56 17.02 16.00 17.34 15.25 17.39 12.75 18.75 12.62 19.00 12.75 19.08 15.25 19.41 16.25 20.00 16.61 21.00 16.67 21.75 16.54 22.33 15.75 22.50 12.00 22.75 11.75 24.00 11.77 24.17 15.00 24.49 15.75 25.50 16.31 28.50 16.33 29.73 15.75 30.08 15.00 30.05 13.50 29.49 10.00 31.10 9.75 31.59 13.25 31.58 15.50 31.11 16.75 30.00 17.82 28.25 18.32 25.25 18.28 23.51 17.50 22.75 16.41 22.32 17.75 22.00 18.11 21.00 18.56 19.50 18.59 18.42 18.00 17.50 16.42 17.05 17.50 16.50 18.11 15.50 18.56 14.00 18.57 12.75 18.06 11.92 17.00 11.50 13.98 8.50 14.28 8.17 14.50 8.38 18.50 7.86 20.75 7.33 21.75 6.25 22.85 5.50 23.35 4.00 23.78ZM36.50 23.80 33.75 23.80 33.78 22.00 36.50 21.83 38.25 21.34 39.84 20.00 40.45 18.50 36.00 18.11 35.06 17.50 34.44 16.75 33.94 14.75 34.18 13.00 35.00 11.32 36.25 10.18 38.25 9.69 39.50 9.99 40.50 10.63 41.59 12.25 42.06 14.00 42.21 16.25 42.50 16.38 44.75 16.35 45.75 15.83 47.50 12.70 48.68 13.25 48.72 13.50 47.66 15.50 47.83 15.75 49.50 16.54 51.75 16.54 52.50 15.96 52.81 15.25 52.87 12.75 54.25 12.62 54.45 12.75 54.45 14.50 54.89 16.25 55.50 16.61 57.00 16.60 57.61 16.25 57.87 15.75 57.70 11.75 59.00 11.54 59.17 11.75 59.49 15.00 59.33 16.50 58.83 17.50 58.00 18.28 57.00 18.62 55.00 18.56 54.00 18.00 53.00 16.40 52.11 18.00 50.75 18.59 48.75 18.33 46.50 17.17 45.00 18.13 42.00 18.48 41.31 20.50 40.00 22.18 38.75 23.10 36.50 23.80ZM151.71 14.50 152.38 14.00 152.59 13.50 152.66 9.75 152.50 9.61 149.25 11.42 148.15 12.75 148.14 13.75 148.50 14.33 149.00 14.59 150.00 14.74 151.71 14.50ZM96.25 18.31 88.76 18.25 88.76 16.75 90.08 16.50 89.43 14.75 89.67 13.00 91.00 11.42 93.00 10.94 94.75 11.40 95.73 12.25 95.74 12.50 94.75 13.62 93.25 12.92 92.25 12.93 91.50 13.21 90.87 14.00 90.84 14.75 91.31 15.75 92.50 16.35 96.25 16.62 96.25 18.31ZM40.62 16.25 40.30 13.50 39.50 12.22 38.75 11.75 38.00 11.62 36.75 11.91 36.25 12.37 35.66 13.50 35.59 14.25 35.66 15.25 36.00 15.81 37.00 16.34 40.62 16.25ZM178.75 23.77 176.58 23.75 176.64 22.00 179.50 21.56 180.32 21.00 181.09 20.00 181.55 18.25 181.58 17.00 180.87 12.25 181.00 12.05 182.25 11.81 182.54 12.25 183.05 15.75 183.07 18.50 182.81 20.00 182.00 21.75 181.25 22.61 180.25 23.33 178.75 23.77ZM29.25 22.80 28.50 22.99 27.59 22.50 27.43 21.75 27.75 20.98 28.75 20.77 29.50 21.14 29.64 22.25 29.25 22.80ZM32.25 22.78 31.50 23.00 30.57 22.50 30.43 21.50 30.75 20.94 31.50 20.75 32.36 21.00 32.64 22.00 32.25 22.78ZM73.25 28.26 72.50 28.49 71.62 28.25 71.33 27.50 71.62 26.50 72.50 26.26 73.26 26.50 73.57 27.50 73.25 28.26ZM76.00 28.39 75.00 28.44 74.39 28.00 74.34 27.00 74.75 26.38 76.00 26.36 76.39 26.75 76.50 27.67 76.00 28.39Z"/>
<path fill="none" stroke-linecap="round" stroke-linejoin="round" stroke="#333336" stroke-width="1.9" d="M1937.5 1019.6 L1945.3999999999999 1028.2 L1953.3 1019.6"/>
<clipPath id="c5"><rect x="0" y="0" width="83.3" height="83.3" rx="14.5"/></clipPath><g transform="translate(675.7 1102.2)" clip-path="url(#c5)"><defs><linearGradient id="ps" x1="0" y1="0" x2="0.2" y2="1"><stop offset="0" stop-color="#827bb7"/><stop offset="0.5" stop-color="#a494c0"/><stop offset="0.62" stop-color="#b09ab8"/><stop offset="1" stop-color="#9a86a8"/></linearGradient></defs><rect width="84" height="84" fill="url(#ps)"/><path d="M0 50 L84 47 L84 84 L0 84Z" fill="#2a2230"/><path d="M0 56 L52 52 L38 84 L0 84Z" fill="#4e4356"/><path d="M6 58 L48 55 L40 66 L6 68Z" fill="#8a7e92" opacity="0.8"/><path d="M6 70 L30 68 L22 84 L6 84Z" fill="#3a3040"/><path d="M22 84 Q44 60 64 56 L68 58 Q48 66 30 84Z" fill="#c0b8c6"/><path d="M64 60 L84 58 L84 84 L56 84Z" fill="#1c1620"/><path d="M68 68 L73 66 L75 84 L69 84Z" fill="#b8904a" opacity="0.55"/><rect x="0" y="8" width="7" height="76" fill="#1e181e"/><rect x="12" y="34" width="5" height="24" fill="#2a2022"/><rect x="24" y="30" width="5" height="24" fill="#4a3a3c"/><rect x="70" y="30" width="5" height="22" fill="#5a4650"/><circle cx="3" cy="12" r="2.8" fill="#f0c46a"/><circle cx="4" cy="20" r="2.8" fill="#f0c46a"/><circle cx="11" cy="22" r="2.4" fill="#f0c46a"/><circle cx="14" cy="38" r="2.6" fill="#f0c46a"/><circle cx="26" cy="34" r="2.4" fill="#f0c46a"/><circle cx="34" cy="44" r="1.8" fill="#f0c46a"/><circle cx="42" cy="46" r="1.6" fill="#f0c46a"/><circle cx="50" cy="47" r="1.5" fill="#f0c46a"/><circle cx="57" cy="48" r="1.4" fill="#f0c46a"/><circle cx="72" cy="32" r="1.6" fill="#f0c46a"/><circle cx="71" cy="62" r="1.6" fill="#f0c46a"/><circle cx="76" cy="64" r="1.4" fill="#f0c46a"/></g>
<path fill="#1a1a1a" fill-rule="nonzero" transform="translate(779.3 1114.4) scale(1.1003 0.9217)" d="M57.50 2.04 56.75 2.04 56.12 1.50 56.08 0.50 56.50 -0.09 57.75 -0.09 58.11 0.25 58.13 1.50 57.50 2.04ZM7.50 23.81 4.50 23.81 2.75 23.27 1.32 22.25 0.41 21.00 -0.09 19.50 -0.05 16.50 0.83 13.75 1.00 13.61 2.00 13.89 2.18 14.25 1.47 16.50 1.33 18.00 1.63 19.75 2.31 20.75 3.50 21.54 5.50 21.83 8.50 21.55 9.63 20.75 10.33 19.25 10.52 17.00 10.52 1.50 12.00 1.38 12.19 1.50 12.07 19.00 11.59 20.75 10.66 22.25 9.00 23.35 7.50 23.81ZM36.00 18.28 33.75 18.36 32.00 18.08 30.75 17.20 30.25 16.24 29.20 17.75 27.50 18.33 25.50 18.27 24.25 17.80 23.44 17.00 23.00 16.16 22.25 17.61 20.95 18.25 18.50 18.31 17.50 18.10 16.50 17.51 15.88 16.50 15.67 15.25 15.65 1.50 17.37 1.50 17.37 14.75 17.46 15.50 17.82 16.00 19.25 16.38 21.25 16.35 22.20 16.00 22.83 15.00 22.88 11.00 24.25 10.83 24.49 11.00 24.51 14.50 24.88 15.75 26.00 16.33 28.75 16.29 29.50 15.89 29.88 15.25 30.02 11.00 31.50 10.84 31.65 14.75 32.00 15.74 33.25 16.35 36.25 16.29 37.25 15.82 37.62 15.00 37.56 13.00 37.08 10.00 38.50 9.64 39.09 12.75 39.08 15.75 38.64 16.75 37.98 17.50 36.00 18.28ZM90.25 18.38 88.81 18.25 88.81 1.50 89.00 1.36 90.47 1.50 90.47 18.25 90.25 18.38ZM141.75 18.26 138.50 18.32 137.75 18.07 136.50 16.92 136.43 18.25 136.25 18.38 132.75 18.30 131.25 17.88 129.75 16.74 129.00 17.89 127.50 18.36 125.00 18.32 122.50 17.36 121.00 18.10 119.75 18.35 115.50 18.33 113.75 17.87 112.86 17.00 112.44 15.50 112.40 1.50 114.12 1.50 114.12 14.75 114.21 15.50 114.75 16.13 116.00 16.38 121.00 16.35 117.90 12.25 117.90 10.50 118.25 10.16 120.25 9.47 122.50 9.26 124.25 9.42 125.50 9.96 126.35 10.75 126.74 11.75 126.83 12.75 126.59 13.75 125.85 14.75 124.06 16.25 124.25 16.38 128.50 16.38 129.50 16.17 129.72 14.00 130.50 12.64 131.75 11.43 134.00 9.89 135.50 9.88 135.85 10.00 138.00 15.65 138.75 16.30 140.00 16.38 141.50 16.26 142.25 15.82 142.60 15.25 142.68 1.50 144.25 1.38 144.32 15.50 143.60 17.25 143.00 17.79 141.75 18.26ZM149.50 18.32 147.86 18.25 148.00 1.36 149.57 1.50 149.50 18.32ZM169.25 18.32 166.25 18.33 164.50 17.84 163.63 16.75 163.25 14.67 162.50 15.87 161.25 16.58 159.50 16.62 158.50 16.33 157.75 15.67 157.21 14.75 157.12 12.75 157.67 11.50 158.75 10.41 163.12 7.75 163.24 6.75 163.50 6.50 164.75 6.53 164.93 15.50 165.30 16.00 166.00 16.33 168.50 16.36 169.68 16.00 170.28 15.25 170.37 14.50 170.38 1.50 172.00 1.40 172.04 15.25 171.83 16.25 171.28 17.25 170.50 17.88 169.25 18.32ZM161.50 4.57 160.75 4.56 160.09 4.00 160.10 3.00 160.50 2.49 161.50 2.40 162.08 2.75 162.19 4.00 161.50 4.57ZM164.50 4.56 163.75 4.57 163.17 4.25 163.01 3.25 163.50 2.47 164.50 2.40 165.05 2.75 165.16 4.00 164.50 4.56ZM123.00 6.35 122.00 6.39 121.41 6.00 121.33 5.00 121.75 4.35 122.50 4.17 123.25 4.52 123.53 5.50 123.00 6.35ZM38.00 6.84 37.00 6.80 36.62 6.50 36.46 5.50 37.00 4.70 38.00 4.66 38.63 5.25 38.55 6.50 38.00 6.84ZM55.75 23.75 52.00 23.81 50.25 23.35 48.75 22.58 47.16 20.75 46.69 19.25 46.67 17.00 47.41 14.25 47.75 13.61 48.00 13.65 49.02 14.00 48.19 16.75 48.23 18.75 48.93 20.25 50.25 21.33 52.25 21.79 55.50 21.77 57.50 21.33 59.36 20.25 60.04 19.25 60.07 18.50 55.50 17.49 55.20 17.25 55.20 15.75 55.50 15.50 58.00 15.33 59.00 14.76 59.61 13.75 59.75 11.90 58.00 13.11 56.75 13.32 55.25 13.09 54.50 12.80 53.42 11.75 52.97 10.00 53.20 8.00 53.94 6.50 54.62 5.75 56.25 4.93 58.00 4.91 58.75 5.17 59.87 6.00 61.09 8.50 61.37 11.50 61.06 14.00 60.50 15.14 59.14 16.25 59.25 16.50 60.75 16.92 61.40 17.50 61.62 18.00 61.59 19.50 61.08 20.75 59.50 22.36 57.50 23.33 55.75 23.75ZM58.14 11.25 59.21 11.00 59.76 10.50 59.36 8.50 58.75 7.57 57.95 7.00 57.00 6.83 56.00 6.99 55.25 7.53 54.71 8.50 54.67 10.25 55.00 10.75 55.75 11.15 58.14 11.25ZM76.50 9.77 75.50 9.85 74.90 9.50 74.78 8.50 75.25 7.73 76.25 7.65 76.82 8.00 76.92 9.25 76.50 9.77ZM79.25 9.85 78.25 9.80 77.88 9.50 77.73 8.50 78.25 7.71 79.25 7.65 79.78 8.00 79.90 9.25 79.25 9.85ZM80.75 18.52 75.50 18.59 73.00 18.33 71.75 18.08 70.00 17.06 69.19 16.00 68.83 14.00 68.93 12.50 69.74 10.00 71.00 10.25 71.12 10.50 70.46 12.25 70.30 13.75 70.40 14.50 71.25 15.54 72.50 16.10 74.00 16.34 80.50 16.38 83.25 16.06 84.15 15.50 84.51 14.00 83.90 10.00 85.50 9.73 86.08 14.25 85.54 16.50 84.75 17.32 83.75 17.85 80.75 18.52ZM162.28 14.50 163.10 13.75 163.24 9.75 163.00 9.63 159.50 11.69 158.67 13.00 158.69 13.75 159.50 14.56 160.75 14.74 162.28 14.50ZM177.50 23.75 174.75 23.88 174.66 22.00 177.25 21.85 179.25 21.26 180.75 19.91 181.36 18.50 177.00 18.15 176.00 17.58 175.20 16.50 174.85 14.75 175.14 12.75 175.90 11.25 177.25 10.12 179.25 9.71 180.75 10.15 181.50 10.77 182.57 12.50 183.25 16.38 187.00 16.32 188.75 16.04 191.75 15.03 194.81 13.50 187.00 11.59 186.70 11.75 186.70 13.25 186.50 13.50 185.25 13.50 185.20 11.00 185.67 10.25 186.25 9.89 188.25 9.91 194.50 11.55 198.33 12.25 198.25 14.02 196.25 14.20 190.25 17.58 187.00 18.32 183.00 18.38 182.05 20.75 180.75 22.33 179.50 23.14 177.50 23.75ZM93.00 23.76 91.00 23.88 90.92 22.00 93.75 21.59 95.00 20.62 95.50 19.73 95.83 18.50 95.87 16.75 95.25 12.12 96.50 11.82 96.82 12.00 97.50 16.37 100.00 16.38 101.05 15.75 102.90 11.50 104.25 10.16 105.25 9.85 106.75 9.87 107.50 10.11 108.29 10.75 109.36 13.00 109.63 16.50 108.25 18.60 102.25 17.11 100.25 18.27 97.50 18.38 96.85 20.75 96.00 22.17 94.50 23.32 93.00 23.76ZM122.86 15.50 125.05 13.50 125.27 12.75 125.00 12.00 124.25 11.48 122.50 11.18 120.25 11.42 119.50 11.75 122.50 15.39 122.86 15.50ZM136.33 16.25 134.50 11.63 132.01 13.25 131.18 14.25 131.24 15.50 132.00 16.12 133.25 16.38 136.33 16.25ZM181.50 16.25 181.33 14.00 180.81 12.75 180.25 12.12 179.50 11.69 178.75 11.63 177.75 11.87 177.22 12.25 176.63 13.25 176.43 14.25 176.65 15.50 177.00 15.93 177.75 16.34 181.50 16.25ZM108.05 16.25 107.84 13.75 107.05 12.25 105.75 11.76 104.50 12.21 103.66 13.50 103.15 15.25 107.75 16.49 108.05 16.25ZM24.25 22.86 23.50 22.97 22.67 22.50 22.60 21.50 23.00 20.89 23.75 20.76 24.50 21.00 24.82 22.00 24.25 22.86ZM30.00 22.81 29.25 22.99 28.36 22.50 28.19 21.75 28.51 21.00 29.50 20.76 30.25 21.12 30.40 22.25 30.00 22.81ZM33.00 22.79 32.25 23.00 31.33 22.50 31.16 21.75 31.50 20.96 32.25 20.75 33.12 21.00 33.40 22.00 33.00 22.79ZM191.75 22.86 191.00 22.97 190.18 22.50 190.11 21.50 190.50 20.90 191.25 20.76 192.02 21.00 192.33 22.00 191.75 22.86ZM53.00 28.26 52.25 28.49 51.37 28.25 51.08 27.50 51.37 26.50 52.25 26.26 53.01 26.50 53.32 27.50 53.00 28.26ZM55.75 28.39 54.75 28.44 54.14 28.00 54.09 27.00 54.50 26.38 55.75 26.36 56.14 26.75 56.25 27.67 55.75 28.39Z"/>
<path fill="none" stroke-linecap="round" stroke-linejoin="round" stroke="#1f8c37" stroke-width="1.9" d="M1920.1000000000001 1139.6 L1928.0 1148.2 L1935.9 1139.6"/>
<clipPath id="c6"><rect x="0" y="0" width="83.3" height="83.3" rx="14.5"/></clipPath><g transform="translate(675.7 1222.2)" clip-path="url(#c6)"><defs><linearGradient id="us" x1="0" y1="0" x2="0" y2="1"><stop offset="0" stop-color="#2b7e94"/><stop offset="0.45" stop-color="#15697f"/><stop offset="0.75" stop-color="#1a6a7a"/><stop offset="1" stop-color="#2a5a66"/></linearGradient></defs><rect width="84" height="84" fill="url(#us)"/><path d="M0 8 Q30 14 84 8 L84 14 Q40 20 0 16Z" fill="#4a94a8" opacity="0.45"/><path d="M46 18 L47.5 60 L38 60 Q36 40 46 18Z" fill="#dfe8ec"/><path d="M46 18 L47.5 60 L44 60 Q44 40 46 18Z" fill="#9fb8c0"/><path d="M37 58 L58 57 L67 54 L67 57 L57 62 L37 62Z" fill="#b8ccd2"/><path d="M0 58 L24 60 L56 76 L84 70 L84 84 L0 84Z" fill="#2e3c44"/><path d="M20 58 L33 59 L60 74 L49 78Z" fill="#b4a68e"/><path d="M56 72 L84 63 L84 72 L60 78Z" fill="#4a6e76"/><rect x="30" y="68" width="3" height="14" fill="#8a9aa0"/><rect x="38" y="72" width="3" height="12" fill="#8a9aa0"/><circle cx="70" cy="74" r="2.5" fill="#9ab0b8"/><circle cx="12" cy="72" r="2" fill="#7a9aa6"/></g>
<path fill="#1a1a1a" fill-rule="nonzero" transform="translate(779.3 1234.4) scale(1.1003 0.9217)" d="M57.50 2.04 56.75 2.04 56.12 1.50 56.08 0.50 56.50 -0.09 57.75 -0.09 58.11 0.25 58.13 1.50 57.50 2.04ZM7.50 23.81 4.50 23.81 2.75 23.27 1.32 22.25 0.41 21.00 -0.09 19.50 -0.05 16.50 0.83 13.75 1.00 13.61 2.00 13.89 2.18 14.25 1.47 16.50 1.33 18.00 1.63 19.75 2.31 20.75 3.50 21.54 5.50 21.83 8.50 21.55 9.63 20.75 10.33 19.25 10.52 17.00 10.52 1.50 12.00 1.38 12.19 1.50 12.07 19.00 11.59 20.75 10.66 22.25 9.00 23.35 7.50 23.81ZM36.00 18.28 33.75 18.36 32.00 18.08 30.75 17.20 30.25 16.24 29.20 17.75 27.50 18.33 25.50 18.27 24.25 17.80 23.44 17.00 23.00 16.16 22.25 17.61 20.95 18.25 18.50 18.31 17.50 18.10 16.50 17.51 15.88 16.50 15.67 15.25 15.65 1.50 17.37 1.50 17.37 14.75 17.46 15.50 17.82 16.00 19.25 16.38 21.25 16.35 22.20 16.00 22.83 15.00 22.88 11.00 24.25 10.83 24.49 11.00 24.51 14.50 24.88 15.75 26.00 16.33 28.75 16.29 29.50 15.89 29.88 15.25 30.02 11.00 31.50 10.84 31.65 14.75 32.00 15.74 33.25 16.35 36.25 16.29 37.25 15.82 37.62 15.00 37.56 13.00 37.08 10.00 38.50 9.64 39.09 12.75 39.08 15.75 38.64 16.75 37.98 17.50 36.00 18.28ZM90.25 18.38 88.81 18.25 88.81 1.50 89.00 1.36 90.47 1.50 90.47 18.25 90.25 18.38ZM141.75 18.26 138.50 18.32 137.75 18.07 136.50 16.92 136.43 18.25 136.25 18.38 132.75 18.30 131.25 17.88 129.75 16.74 129.00 17.89 127.50 18.36 125.00 18.32 122.50 17.36 121.00 18.10 119.75 18.35 115.50 18.33 113.75 17.87 112.86 17.00 112.44 15.50 112.40 1.50 114.12 1.50 114.12 14.75 114.21 15.50 114.75 16.13 116.00 16.38 121.00 16.35 117.90 12.25 117.90 10.50 118.25 10.16 120.25 9.47 122.50 9.26 124.25 9.42 125.50 9.96 126.35 10.75 126.74 11.75 126.83 12.75 126.59 13.75 125.85 14.75 124.06 16.25 124.25 16.38 128.50 16.38 129.50 16.17 129.72 14.00 130.50 12.64 131.75 11.43 134.00 9.89 135.50 9.88 135.85 10.00 138.00 15.65 138.75 16.30 140.00 16.38 141.50 16.26 142.25 15.82 142.60 15.25 142.68 1.50 144.25 1.38 144.32 15.50 143.60 17.25 143.00 17.79 141.75 18.26ZM149.50 18.32 147.86 18.25 148.00 1.36 149.57 1.50 149.50 18.32ZM169.25 18.32 166.25 18.33 164.50 17.84 163.63 16.75 163.25 14.67 162.50 15.87 161.25 16.58 159.50 16.62 158.50 16.33 157.75 15.67 157.21 14.75 157.12 12.75 157.67 11.50 158.75 10.41 163.12 7.75 163.24 6.75 163.50 6.50 164.75 6.53 164.93 15.50 165.30 16.00 166.00 16.33 168.50 16.36 169.68 16.00 170.28 15.25 170.37 14.50 170.38 1.50 172.00 1.40 172.04 15.25 171.83 16.25 171.28 17.25 170.50 17.88 169.25 18.32ZM161.50 4.57 160.75 4.56 160.09 4.00 160.10 3.00 160.50 2.49 161.50 2.40 162.08 2.75 162.19 4.00 161.50 4.57ZM164.50 4.56 163.75 4.57 163.17 4.25 163.01 3.25 163.50 2.47 164.50 2.40 165.05 2.75 165.16 4.00 164.50 4.56ZM123.00 6.35 122.00 6.39 121.41 6.00 121.33 5.00 121.75 4.35 122.50 4.17 123.25 4.52 123.53 5.50 123.00 6.35ZM38.00 6.84 37.00 6.80 36.62 6.50 36.46 5.50 37.00 4.70 38.00 4.66 38.63 5.25 38.55 6.50 38.00 6.84ZM55.75 23.75 52.00 23.81 50.25 23.35 48.75 22.58 47.16 20.75 46.69 19.25 46.67 17.00 47.41 14.25 47.75 13.61 48.00 13.65 49.02 14.00 48.19 16.75 48.23 18.75 48.93 20.25 50.25 21.33 52.25 21.79 55.50 21.77 57.50 21.33 59.36 20.25 60.04 19.25 60.07 18.50 55.50 17.49 55.20 17.25 55.20 15.75 55.50 15.50 58.00 15.33 59.00 14.76 59.61 13.75 59.75 11.90 58.00 13.11 56.75 13.32 55.25 13.09 54.50 12.80 53.42 11.75 52.97 10.00 53.20 8.00 53.94 6.50 54.62 5.75 56.25 4.93 58.00 4.91 58.75 5.17 59.87 6.00 61.09 8.50 61.37 11.50 61.06 14.00 60.50 15.14 59.14 16.25 59.25 16.50 60.75 16.92 61.40 17.50 61.62 18.00 61.59 19.50 61.08 20.75 59.50 22.36 57.50 23.33 55.75 23.75ZM58.14 11.25 59.21 11.00 59.76 10.50 59.36 8.50 58.75 7.57 57.95 7.00 57.00 6.83 56.00 6.99 55.25 7.53 54.71 8.50 54.67 10.25 55.00 10.75 55.75 11.15 58.14 11.25ZM76.50 9.77 75.50 9.85 74.90 9.50 74.78 8.50 75.25 7.73 76.25 7.65 76.82 8.00 76.92 9.25 76.50 9.77ZM79.25 9.85 78.25 9.80 77.88 9.50 77.73 8.50 78.25 7.71 79.25 7.65 79.78 8.00 79.90 9.25 79.25 9.85ZM80.75 18.52 75.50 18.59 73.00 18.33 71.75 18.08 70.00 17.06 69.19 16.00 68.83 14.00 68.93 12.50 69.74 10.00 71.00 10.25 71.12 10.50 70.46 12.25 70.30 13.75 70.40 14.50 71.25 15.54 72.50 16.10 74.00 16.34 80.50 16.38 83.25 16.06 84.15 15.50 84.51 14.00 83.90 10.00 85.50 9.73 86.08 14.25 85.54 16.50 84.75 17.32 83.75 17.85 80.75 18.52ZM162.28 14.50 163.10 13.75 163.24 9.75 163.00 9.63 159.50 11.69 158.67 13.00 158.69 13.75 159.50 14.56 160.75 14.74 162.28 14.50ZM177.50 23.75 174.75 23.88 174.66 22.00 177.25 21.85 179.25 21.26 180.75 19.91 181.36 18.50 177.00 18.15 176.00 17.58 175.20 16.50 174.85 14.75 175.14 12.75 175.90 11.25 177.25 10.12 179.25 9.71 180.75 10.15 181.50 10.77 182.57 12.50 183.25 16.38 187.00 16.32 188.75 16.04 191.75 15.03 194.81 13.50 187.00 11.59 186.70 11.75 186.70 13.25 186.50 13.50 185.25 13.50 185.20 11.00 185.67 10.25 186.25 9.89 188.25 9.91 194.50 11.55 198.33 12.25 198.25 14.02 196.25 14.20 190.25 17.58 187.00 18.32 183.00 18.38 182.05 20.75 180.75 22.33 179.50 23.14 177.50 23.75ZM93.00 23.76 91.00 23.88 90.92 22.00 93.75 21.59 95.00 20.62 95.50 19.73 95.83 18.50 95.87 16.75 95.25 12.12 96.50 11.82 96.82 12.00 97.50 16.37 100.00 16.38 101.05 15.75 102.90 11.50 104.25 10.16 105.25 9.85 106.75 9.87 107.50 10.11 108.29 10.75 109.36 13.00 109.63 16.50 108.25 18.60 102.25 17.11 100.25 18.27 97.50 18.38 96.85 20.75 96.00 22.17 94.50 23.32 93.00 23.76ZM122.86 15.50 125.05 13.50 125.27 12.75 125.00 12.00 124.25 11.48 122.50 11.18 120.25 11.42 119.50 11.75 122.50 15.39 122.86 15.50ZM136.33 16.25 134.50 11.63 132.01 13.25 131.18 14.25 131.24 15.50 132.00 16.12 133.25 16.38 136.33 16.25ZM181.50 16.25 181.33 14.00 180.81 12.75 180.25 12.12 179.50 11.69 178.75 11.63 177.75 11.87 177.22 12.25 176.63 13.25 176.43 14.25 176.65 15.50 177.00 15.93 177.75 16.34 181.50 16.25ZM108.05 16.25 107.84 13.75 107.05 12.25 105.75 11.76 104.50 12.21 103.66 13.50 103.15 15.25 107.75 16.49 108.05 16.25ZM24.25 22.86 23.50 22.97 22.67 22.50 22.60 21.50 23.00 20.89 23.75 20.76 24.50 21.00 24.82 22.00 24.25 22.86ZM30.00 22.81 29.25 22.99 28.36 22.50 28.19 21.75 28.51 21.00 29.50 20.76 30.25 21.12 30.40 22.25 30.00 22.81ZM33.00 22.79 32.25 23.00 31.33 22.50 31.16 21.75 31.50 20.96 32.25 20.75 33.12 21.00 33.40 22.00 33.00 22.79ZM191.75 22.86 191.00 22.97 190.18 22.50 190.11 21.50 190.50 20.90 191.25 20.76 192.02 21.00 192.33 22.00 191.75 22.86ZM53.00 28.26 52.25 28.49 51.37 28.25 51.08 27.50 51.37 26.50 52.25 26.26 53.01 26.50 53.32 27.50 53.00 28.26ZM55.75 28.39 54.75 28.44 54.14 28.00 54.09 27.00 54.50 26.38 55.75 26.36 56.14 26.75 56.25 27.67 55.75 28.39Z"/>
<path fill="none" stroke-linecap="round" stroke-linejoin="round" stroke="#1f8c37" stroke-width="1.9" d="M1920.1000000000001 1259.6 L1928.0 1268.2 L1935.9 1259.6"/>
<clipPath id="c7"><rect x="0" y="0" width="83.3" height="83.3" rx="14.5"/></clipPath><g transform="translate(675.7 1342.2)" clip-path="url(#c7)"><defs><linearGradient id="ps" x1="0" y1="0" x2="0.2" y2="1"><stop offset="0" stop-color="#827bb7"/><stop offset="0.5" stop-color="#a494c0"/><stop offset="0.62" stop-color="#b09ab8"/><stop offset="1" stop-color="#9a86a8"/></linearGradient></defs><rect width="84" height="84" fill="url(#ps)"/><path d="M0 50 L84 47 L84 84 L0 84Z" fill="#2a2230"/><path d="M0 56 L52 52 L38 84 L0 84Z" fill="#4e4356"/><path d="M6 58 L48 55 L40 66 L6 68Z" fill="#8a7e92" opacity="0.8"/><path d="M6 70 L30 68 L22 84 L6 84Z" fill="#3a3040"/><path d="M22 84 Q44 60 64 56 L68 58 Q48 66 30 84Z" fill="#c0b8c6"/><path d="M64 60 L84 58 L84 84 L56 84Z" fill="#1c1620"/><path d="M68 68 L73 66 L75 84 L69 84Z" fill="#b8904a" opacity="0.55"/><rect x="0" y="8" width="7" height="76" fill="#1e181e"/><rect x="12" y="34" width="5" height="24" fill="#2a2022"/><rect x="24" y="30" width="5" height="24" fill="#4a3a3c"/><rect x="70" y="30" width="5" height="22" fill="#5a4650"/><circle cx="3" cy="12" r="2.8" fill="#f0c46a"/><circle cx="4" cy="20" r="2.8" fill="#f0c46a"/><circle cx="11" cy="22" r="2.4" fill="#f0c46a"/><circle cx="14" cy="38" r="2.6" fill="#f0c46a"/><circle cx="26" cy="34" r="2.4" fill="#f0c46a"/><circle cx="34" cy="44" r="1.8" fill="#f0c46a"/><circle cx="42" cy="46" r="1.6" fill="#f0c46a"/><circle cx="50" cy="47" r="1.5" fill="#f0c46a"/><circle cx="57" cy="48" r="1.4" fill="#f0c46a"/><circle cx="72" cy="32" r="1.6" fill="#f0c46a"/><circle cx="71" cy="62" r="1.6" fill="#f0c46a"/><circle cx="76" cy="64" r="1.4" fill="#f0c46a"/></g>
<path fill="none" stroke-linecap="round" stroke-linejoin="round" stroke="#1f8c37" stroke-width="1.9" d="M1920.1000000000001 1379.6 L1928.0 1388.2 L1935.9 1379.6"/>
<clipPath id="c8"><rect x="0" y="0" width="83.3" height="83.3" rx="14.5"/></clipPath><g transform="translate(675.7 1462.2)" clip-path="url(#c8)"><defs><linearGradient id="us" x1="0" y1="0" x2="0" y2="1"><stop offset="0" stop-color="#2b7e94"/><stop offset="0.45" stop-color="#15697f"/><stop offset="0.75" stop-color="#1a6a7a"/><stop offset="1" stop-color="#2a5a66"/></linearGradient></defs><rect width="84" height="84" fill="url(#us)"/><path d="M0 8 Q30 14 84 8 L84 14 Q40 20 0 16Z" fill="#4a94a8" opacity="0.45"/><path d="M46 18 L47.5 60 L38 60 Q36 40 46 18Z" fill="#dfe8ec"/><path d="M46 18 L47.5 60 L44 60 Q44 40 46 18Z" fill="#9fb8c0"/><path d="M37 58 L58 57 L67 54 L67 57 L57 62 L37 62Z" fill="#b8ccd2"/><path d="M0 58 L24 60 L56 76 L84 70 L84 84 L0 84Z" fill="#2e3c44"/><path d="M20 58 L33 59 L60 74 L49 78Z" fill="#b4a68e"/><path d="M56 72 L84 63 L84 72 L60 78Z" fill="#4a6e76"/><rect x="30" y="68" width="3" height="14" fill="#8a9aa0"/><rect x="38" y="72" width="3" height="12" fill="#8a9aa0"/><circle cx="70" cy="74" r="2.5" fill="#9ab0b8"/><circle cx="12" cy="72" r="2" fill="#7a9aa6"/></g>
<path fill="#1a1a1a" fill-rule="nonzero" transform="translate(779.3 1474.4) scale(1.1003 0.9217)" d="M57.50 2.04 56.75 2.04 56.12 1.50 56.08 0.50 56.50 -0.09 57.75 -0.09 58.11 0.25 58.13 1.50 57.50 2.04ZM7.50 23.81 4.50 23.81 2.75 23.27 1.32 22.25 0.41 21.00 -0.09 19.50 -0.05 16.50 0.83 13.75 1.00 13.61 2.00 13.89 2.18 14.25 1.47 16.50 1.33 18.00 1.63 19.75 2.31 20.75 3.50 21.54 5.50 21.83 8.50 21.55 9.63 20.75 10.33 19.25 10.52 17.00 10.52 1.50 12.00 1.38 12.19 1.50 12.07 19.00 11.59 20.75 10.66 22.25 9.00 23.35 7.50 23.81ZM36.00 18.28 33.75 18.36 32.00 18.08 30.75 17.20 30.25 16.24 29.20 17.75 27.50 18.33 25.50 18.27 24.25 17.80 23.44 17.00 23.00 16.16 22.25 17.61 20.95 18.25 18.50 18.31 17.50 18.10 16.50 17.51 15.88 16.50 15.67 15.25 15.65 1.50 17.37 1.50 17.37 14.75 17.46 15.50 17.82 16.00 19.25 16.38 21.25 16.35 22.20 16.00 22.83 15.00 22.88 11.00 24.25 10.83 24.49 11.00 24.51 14.50 24.88 15.75 26.00 16.33 28.75 16.29 29.50 15.89 29.88 15.25 30.02 11.00 31.50 10.84 31.65 14.75 32.00 15.74 33.25 16.35 36.25 16.29 37.25 15.82 37.62 15.00 37.56 13.00 37.08 10.00 38.50 9.64 39.09 12.75 39.08 15.75 38.64 16.75 37.98 17.50 36.00 18.28ZM90.25 18.38 88.81 18.25 88.81 1.50 89.00 1.36 90.47 1.50 90.47 18.25 90.25 18.38ZM141.75 18.26 138.50 18.32 137.75 18.07 136.50 16.92 136.43 18.25 136.25 18.38 132.75 18.30 131.25 17.88 129.75 16.74 129.00 17.89 127.50 18.36 125.00 18.32 122.50 17.36 121.00 18.10 119.75 18.35 115.50 18.33 113.75 17.87 112.86 17.00 112.44 15.50 112.40 1.50 114.12 1.50 114.12 14.75 114.21 15.50 114.75 16.13 116.00 16.38 121.00 16.35 117.90 12.25 117.90 10.50 118.25 10.16 120.25 9.47 122.50 9.26 124.25 9.42 125.50 9.96 126.35 10.75 126.74 11.75 126.83 12.75 126.59 13.75 125.85 14.75 124.06 16.25 124.25 16.38 128.50 16.38 129.50 16.17 129.72 14.00 130.50 12.64 131.75 11.43 134.00 9.89 135.50 9.88 135.85 10.00 138.00 15.65 138.75 16.30 140.00 16.38 141.50 16.26 142.25 15.82 142.60 15.25 142.68 1.50 144.25 1.38 144.32 15.50 143.60 17.25 143.00 17.79 141.75 18.26ZM149.50 18.32 147.86 18.25 148.00 1.36 149.57 1.50 149.50 18.32ZM169.25 18.32 166.25 18.33 164.50 17.84 163.63 16.75 163.25 14.67 162.50 15.87 161.25 16.58 159.50 16.62 158.50 16.33 157.75 15.67 157.21 14.75 157.12 12.75 157.67 11.50 158.75 10.41 163.12 7.75 163.24 6.75 163.50 6.50 164.75 6.53 164.93 15.50 165.30 16.00 166.00 16.33 168.50 16.36 169.68 16.00 170.28 15.25 170.37 14.50 170.38 1.50 172.00 1.40 172.04 15.25 171.83 16.25 171.28 17.25 170.50 17.88 169.25 18.32ZM161.50 4.57 160.75 4.56 160.09 4.00 160.10 3.00 160.50 2.49 161.50 2.40 162.08 2.75 162.19 4.00 161.50 4.57ZM164.50 4.56 163.75 4.57 163.17 4.25 163.01 3.25 163.50 2.47 164.50 2.40 165.05 2.75 165.16 4.00 164.50 4.56ZM123.00 6.35 122.00 6.39 121.41 6.00 121.33 5.00 121.75 4.35 122.50 4.17 123.25 4.52 123.53 5.50 123.00 6.35ZM38.00 6.84 37.00 6.80 36.62 6.50 36.46 5.50 37.00 4.70 38.00 4.66 38.63 5.25 38.55 6.50 38.00 6.84ZM55.75 23.75 52.00 23.81 50.25 23.35 48.75 22.58 47.16 20.75 46.69 19.25 46.67 17.00 47.41 14.25 47.75 13.61 48.00 13.65 49.02 14.00 48.19 16.75 48.23 18.75 48.93 20.25 50.25 21.33 52.25 21.79 55.50 21.77 57.50 21.33 59.36 20.25 60.04 19.25 60.07 18.50 55.50 17.49 55.20 17.25 55.20 15.75 55.50 15.50 58.00 15.33 59.00 14.76 59.61 13.75 59.75 11.90 58.00 13.11 56.75 13.32 55.25 13.09 54.50 12.80 53.42 11.75 52.97 10.00 53.20 8.00 53.94 6.50 54.62 5.75 56.25 4.93 58.00 4.91 58.75 5.17 59.87 6.00 61.09 8.50 61.37 11.50 61.06 14.00 60.50 15.14 59.14 16.25 59.25 16.50 60.75 16.92 61.40 17.50 61.62 18.00 61.59 19.50 61.08 20.75 59.50 22.36 57.50 23.33 55.75 23.75ZM58.14 11.25 59.21 11.00 59.76 10.50 59.36 8.50 58.75 7.57 57.95 7.00 57.00 6.83 56.00 6.99 55.25 7.53 54.71 8.50 54.67 10.25 55.00 10.75 55.75 11.15 58.14 11.25ZM76.50 9.77 75.50 9.85 74.90 9.50 74.78 8.50 75.25 7.73 76.25 7.65 76.82 8.00 76.92 9.25 76.50 9.77ZM79.25 9.85 78.25 9.80 77.88 9.50 77.73 8.50 78.25 7.71 79.25 7.65 79.78 8.00 79.90 9.25 79.25 9.85ZM80.75 18.52 75.50 18.59 73.00 18.33 71.75 18.08 70.00 17.06 69.19 16.00 68.83 14.00 68.93 12.50 69.74 10.00 71.00 10.25 71.12 10.50 70.46 12.25 70.30 13.75 70.40 14.50 71.25 15.54 72.50 16.10 74.00 16.34 80.50 16.38 83.25 16.06 84.15 15.50 84.51 14.00 83.90 10.00 85.50 9.73 86.08 14.25 85.54 16.50 84.75 17.32 83.75 17.85 80.75 18.52ZM162.28 14.50 163.10 13.75 163.24 9.75 163.00 9.63 159.50 11.69 158.67 13.00 158.69 13.75 159.50 14.56 160.75 14.74 162.28 14.50ZM177.50 23.75 174.75 23.88 174.66 22.00 177.25 21.85 179.25 21.26 180.75 19.91 181.36 18.50 177.00 18.15 176.00 17.58 175.20 16.50 174.85 14.75 175.14 12.75 175.90 11.25 177.25 10.12 179.25 9.71 180.75 10.15 181.50 10.77 182.57 12.50 183.25 16.38 187.00 16.32 188.75 16.04 191.75 15.03 194.81 13.50 187.00 11.59 186.70 11.75 186.70 13.25 186.50 13.50 185.25 13.50 185.20 11.00 185.67 10.25 186.25 9.89 188.25 9.91 194.50 11.55 198.33 12.25 198.25 14.02 196.25 14.20 190.25 17.58 187.00 18.32 183.00 18.38 182.05 20.75 180.75 22.33 179.50 23.14 177.50 23.75ZM93.00 23.76 91.00 23.88 90.92 22.00 93.75 21.59 95.00 20.62 95.50 19.73 95.83 18.50 95.87 16.75 95.25 12.12 96.50 11.82 96.82 12.00 97.50 16.37 100.00 16.38 101.05 15.75 102.90 11.50 104.25 10.16 105.25 9.85 106.75 9.87 107.50 10.11 108.29 10.75 109.36 13.00 109.63 16.50 108.25 18.60 102.25 17.11 100.25 18.27 97.50 18.38 96.85 20.75 96.00 22.17 94.50 23.32 93.00 23.76ZM122.86 15.50 125.05 13.50 125.27 12.75 125.00 12.00 124.25 11.48 122.50 11.18 120.25 11.42 119.50 11.75 122.50 15.39 122.86 15.50ZM136.33 16.25 134.50 11.63 132.01 13.25 131.18 14.25 131.24 15.50 132.00 16.12 133.25 16.38 136.33 16.25ZM181.50 16.25 181.33 14.00 180.81 12.75 180.25 12.12 179.50 11.69 178.75 11.63 177.75 11.87 177.22 12.25 176.63 13.25 176.43 14.25 176.65 15.50 177.00 15.93 177.75 16.34 181.50 16.25ZM108.05 16.25 107.84 13.75 107.05 12.25 105.75 11.76 104.50 12.21 103.66 13.50 103.15 15.25 107.75 16.49 108.05 16.25ZM24.25 22.86 23.50 22.97 22.67 22.50 22.60 21.50 23.00 20.89 23.75 20.76 24.50 21.00 24.82 22.00 24.25 22.86ZM30.00 22.81 29.25 22.99 28.36 22.50 28.19 21.75 28.51 21.00 29.50 20.76 30.25 21.12 30.40 22.25 30.00 22.81ZM33.00 22.79 32.25 23.00 31.33 22.50 31.16 21.75 31.50 20.96 32.25 20.75 33.12 21.00 33.40 22.00 33.00 22.79ZM191.75 22.86 191.00 22.97 190.18 22.50 190.11 21.50 190.50 20.90 191.25 20.76 192.02 21.00 192.33 22.00 191.75 22.86ZM53.00 28.26 52.25 28.49 51.37 28.25 51.08 27.50 51.37 26.50 52.25 26.26 53.01 26.50 53.32 27.50 53.00 28.26ZM55.75 28.39 54.75 28.44 54.14 28.00 54.09 27.00 54.50 26.38 55.75 26.36 56.14 26.75 56.25 27.67 55.75 28.39Z"/>
<path fill="none" stroke-linecap="round" stroke-linejoin="round" stroke="#333336" stroke-width="1.9" d="M1937.5 1499.6 L1945.3999999999999 1508.2 L1953.3 1499.6"/>
<g fill="none" stroke-linecap="round" stroke-linejoin="round" stroke="#58585c" stroke-width="1.9" transform="translate(2250.9 530.7) scale(1.07)"><path d="M17 3a2.85 2.83 0 1 1 4 4L7.5 20.5 2 22l1.5-5.5Z"/></g>
<path fill="none" stroke-linecap="round" stroke-linejoin="round" stroke="#e2641a" stroke-width="2.5" d="M2323.2 538.3 L2337.6 551.3 M2337.6 538.3 L2323.2 551.3"/>
<g fill="none" stroke-linecap="round" stroke-linejoin="round" stroke="#58585c" stroke-width="1.9" transform="translate(2250.9 650.7) scale(1.07)"><path d="M17 3a2.85 2.83 0 1 1 4 4L7.5 20.5 2 22l1.5-5.5Z"/></g>
<path fill="none" stroke-linecap="round" stroke-linejoin="round" stroke="#e2641a" stroke-width="2.5" d="M2323.2 658.3 L2337.6 671.3 M2337.6 658.3 L2323.2 671.3"/>
<g fill="none" stroke-linecap="round" stroke-linejoin="round" stroke="#58585c" stroke-width="1.9" transform="translate(2250.9 770.7) scale(1.07)"><path d="M17 3a2.85 2.83 0 1 1 4 4L7.5 20.5 2 22l1.5-5.5Z"/></g>
<path fill="none" stroke-linecap="round" stroke-linejoin="round" stroke="#e2641a" stroke-width="2.5" d="M2323.2 778.3 L2337.6 791.3 M2337.6 778.3 L2323.2 791.3"/>
<g fill="none" stroke-linecap="round" stroke-linejoin="round" stroke="#58585c" stroke-width="1.9" transform="translate(2250.9 890.7) scale(1.07)"><path d="M17 3a2.85 2.83 0 1 1 4 4L7.5 20.5 2 22l1.5-5.5Z"/></g>
<path fill="none" stroke-linecap="round" stroke-linejoin="round" stroke="#e2641a" stroke-width="2.5" d="M2323.2 898.3 L2337.6 911.3 M2337.6 898.3 L2323.2 911.3"/>
<g fill="none" stroke-linecap="round" stroke-linejoin="round" stroke="#58585c" stroke-width="1.9" transform="translate(2250.9 1010.7) scale(1.07)"><path d="M17 3a2.85 2.83 0 1 1 4 4L7.5 20.5 2 22l1.5-5.5Z"/></g>
<path fill="none" stroke-linecap="round" stroke-linejoin="round" stroke="#e2641a" stroke-width="2.5" d="M2323.2 1018.3 L2337.6 1031.3 M2337.6 1018.3 L2323.2 1031.3"/>
<g fill="none" stroke-linecap="round" stroke-linejoin="round" stroke="#58585c" stroke-width="1.9" transform="translate(2250.9 1130.7) scale(1.07)"><path d="M17 3a2.85 2.83 0 1 1 4 4L7.5 20.5 2 22l1.5-5.5Z"/></g>
<path fill="none" stroke-linecap="round" stroke-linejoin="round" stroke="#e2641a" stroke-width="2.5" d="M2323.2 1138.3 L2337.6 1151.3 M2337.6 1138.3 L2323.2 1151.3"/>
<g fill="none" stroke-linecap="round" stroke-linejoin="round" stroke="#58585c" stroke-width="1.9" transform="translate(2250.9 1250.7) scale(1.07)"><path d="M17 3a2.85 2.83 0 1 1 4 4L7.5 20.5 2 22l1.5-5.5Z"/></g>
<path fill="none" stroke-linecap="round" stroke-linejoin="round" stroke="#e2641a" stroke-width="2.5" d="M2323.2 1258.3 L2337.6 1271.3 M2337.6 1258.3 L2323.2 1271.3"/>
<g fill="none" stroke-linecap="round" stroke-linejoin="round" stroke="#58585c" stroke-width="1.9" transform="translate(2250.9 1370.7) scale(1.07)"><path d="M17 3a2.85 2.83 0 1 1 4 4L7.5 20.5 2 22l1.5-5.5Z"/></g>
<path fill="none" stroke-linecap="round" stroke-linejoin="round" stroke="#e2641a" stroke-width="2.5" d="M2323.2 1378.3 L2337.6 1391.3 M2337.6 1378.3 L2323.2 1391.3"/>
<g fill="none" stroke-linecap="round" stroke-linejoin="round" stroke="#58585c" stroke-width="1.9" transform="translate(2250.9 1490.7) scale(1.07)"><path d="M17 3a2.85 2.83 0 1 1 4 4L7.5 20.5 2 22l1.5-5.5Z"/></g>
<path fill="none" stroke-linecap="round" stroke-linejoin="round" stroke="#e2641a" stroke-width="2.5" d="M2323.2 1498.3 L2337.6 1511.3 M2337.6 1498.3 L2323.2 1511.3"/>
<path fill="none" stroke-linecap="round" stroke-linejoin="round" stroke="#444447" stroke-width="2.6" d="M1985.3 1605.8 L1975.5 1615.6 L1985.3 1625.4"/><path fill="none" stroke-linecap="round" stroke-linejoin="round" stroke="#444447" stroke-width="2.6" d="M2243.6 1605.8 L2253.2 1615.6 L2243.6 1625.4"/></svg>
<div style="position:absolute;left:0;top:0;width:2071.5px;height:1648px;overflow:hidden"><span style="position:absolute;left:2026.30px;top:437.35px;font-size:20.5px;line-height:20.5px;font-weight:400;color:#545457;letter-spacing:0.000px;white-space:nowrap;">Gues</span>
<span style="position:absolute;left:2054.50px;top:534.25px;font-size:22.5px;line-height:22.5px;font-weight:400;-webkit-text-stroke:0.25px #1a1a1a;color:#1a1a1a;letter-spacing:0.000px;white-space:nowrap;">4.5</span>
<span style="position:absolute;left:2054.50px;top:654.25px;font-size:22.5px;line-height:22.5px;font-weight:400;-webkit-text-stroke:0.25px #1a1a1a;color:#1a1a1a;letter-spacing:0.000px;white-space:nowrap;">4.5</span>
<span style="position:absolute;left:2054.50px;top:774.25px;font-size:22.5px;line-height:22.5px;font-weight:400;-webkit-text-stroke:0.25px #1a1a1a;color:#1a1a1a;letter-spacing:0.000px;white-space:nowrap;">4.5</span>
<span style="position:absolute;left:2054.50px;top:894.25px;font-size:22.5px;line-height:22.5px;font-weight:400;-webkit-text-stroke:0.25px #1a1a1a;color:#1a1a1a;letter-spacing:0.000px;white-space:nowrap;">4.5</span>
<span style="position:absolute;left:2054.50px;top:1014.25px;font-size:22.5px;line-height:22.5px;font-weight:400;-webkit-text-stroke:0.25px #1a1a1a;color:#1a1a1a;letter-spacing:0.000px;white-space:nowrap;">4.5</span>
<span style="position:absolute;left:2054.50px;top:1134.25px;font-size:22.5px;line-height:22.5px;font-weight:400;-webkit-text-stroke:0.25px #1a1a1a;color:#1a1a1a;letter-spacing:0.000px;white-space:nowrap;">4.5</span>
<span style="position:absolute;left:2054.50px;top:1254.25px;font-size:22.5px;line-height:22.5px;font-weight:400;-webkit-text-stroke:0.25px #1a1a1a;color:#1a1a1a;letter-spacing:0.000px;white-space:nowrap;">4.5</span>
<span style="position:absolute;left:2054.50px;top:1374.25px;font-size:22.5px;line-height:22.5px;font-weight:400;-webkit-text-stroke:0.25px #1a1a1a;color:#1a1a1a;letter-spacing:0.000px;white-space:nowrap;">4.5</span>
<span style="position:absolute;left:2054.50px;top:1494.25px;font-size:22.5px;line-height:22.5px;font-weight:400;-webkit-text-stroke:0.25px #1a1a1a;color:#1a1a1a;letter-spacing:0.000px;white-space:nowrap;">4.5</span></div>
<span class="f" style="position:absolute;left:143.00px;top:135.46px;font-size:24.5px;line-height:24.5px;font-weight:400;-webkit-text-stroke:0.25px #ffffff;color:#ffffff;letter-spacing:1.268px;white-space:nowrap;">Dashboard</span>
<span class="f" style="position:absolute;left:143.00px;top:226.66px;font-size:24.5px;line-height:24.5px;font-weight:400;-webkit-text-stroke:0.25px #1c1c1c;color:#1c1c1c;letter-spacing:0.342px;white-space:nowrap;">Packages</span>
<span class="f" style="position:absolute;left:143.00px;top:316.46px;font-size:24.5px;line-height:24.5px;font-weight:400;-webkit-text-stroke:0.25px #1c1c1c;color:#1c1c1c;letter-spacing:0.600px;white-space:nowrap;">Bookings</span>
<span class="f" style="position:absolute;left:143.00px;top:407.06px;font-size:24.5px;line-height:24.5px;font-weight:400;-webkit-text-stroke:0.25px #1c1c1c;color:#1c1c1c;letter-spacing:0.597px;white-space:nowrap;">Comissions</span>
<span class="f" style="position:absolute;left:143.00px;top:496.56px;font-size:24.5px;line-height:24.5px;font-weight:400;-webkit-text-stroke:0.25px #1c1c1c;color:#1c1c1c;letter-spacing:0.259px;white-space:nowrap;">Package Services</span>
<span class="f" style="position:absolute;left:143.00px;top:586.66px;font-size:24.5px;line-height:24.5px;font-weight:400;-webkit-text-stroke:0.25px #1c1c1c;color:#1c1c1c;letter-spacing:1.056px;white-space:nowrap;">Agency profile</span>
<span class="f" style="position:absolute;left:143.00px;top:676.66px;font-size:24.5px;line-height:24.5px;font-weight:400;-webkit-text-stroke:0.25px #1c1c1c;color:#1c1c1c;letter-spacing:1.762px;white-space:nowrap;">Staff</span>
<span class="f" style="position:absolute;left:143.00px;top:766.46px;font-size:24.5px;line-height:24.5px;font-weight:400;-webkit-text-stroke:0.25px #1c1c1c;color:#1c1c1c;letter-spacing:-0.660px;white-space:nowrap;">Roles</span>
<span class="f" style="position:absolute;left:143.00px;top:1569.86px;font-size:24.5px;line-height:24.5px;font-weight:400;-webkit-text-stroke:0.25px #1c1c1c;color:#1c1c1c;letter-spacing:1.067px;white-space:nowrap;">Settings</span>
<span class="f" style="position:absolute;left:480.00px;top:79.17px;font-size:54.5px;line-height:54.5px;font-weight:700;color:#0d0d0d;letter-spacing:-0.145px;white-space:nowrap;">Packages</span>
<span class="f" style="position:absolute;left:619.00px;top:234.28px;font-size:24px;line-height:24px;font-weight:400;-webkit-text-stroke:0.9px #1c1c1c;color:#1c1c1c;letter-spacing:0.373px;white-space:nowrap;">Filter By</span>
<span class="f" style="position:absolute;left:783.00px;top:234.28px;font-size:24px;line-height:24px;font-weight:400;-webkit-text-stroke:0.9px #1c1c1c;color:#1c1c1c;letter-spacing:1.391px;white-space:nowrap;">Status</span>
<span class="f" style="position:absolute;left:956.00px;top:234.28px;font-size:24px;line-height:24px;font-weight:400;-webkit-text-stroke:0.9px #1c1c1c;color:#1c1c1c;letter-spacing:1.026px;white-space:nowrap;">Package name</span>
<span class="f" style="position:absolute;left:1226.50px;top:234.28px;font-size:24px;line-height:24px;font-weight:400;-webkit-text-stroke:0.9px #1c1c1c;color:#1c1c1c;letter-spacing:1.069px;white-space:nowrap;">Package type</span>
<span class="f" style="position:absolute;left:1482.50px;top:234.28px;font-size:24px;line-height:24px;font-weight:400;-webkit-text-stroke:0.9px #1c1c1c;color:#1c1c1c;letter-spacing:1.262px;white-space:nowrap;">Filled data percentage</span>
<span class="f" style="position:absolute;left:1890.00px;top:230.28px;font-size:24px;line-height:24px;font-weight:400;-webkit-text-stroke:0.9px #d5163d;color:#d5163d;letter-spacing:0.354px;white-space:nowrap;">Reset Filter</span>
<span class="f" style="position:absolute;left:538.30px;top:338.07px;font-size:20px;line-height:20px;font-weight:400;color:#b4b4b8;letter-spacing:-0.146px;white-space:nowrap;">Search by ID, name ..</span>
<span class="f" style="position:absolute;left:1275.30px;top:334.68px;font-size:24px;line-height:24px;font-weight:400;color:#1c1c1c;letter-spacing:0.125px;white-space:nowrap;">Export</span>
<span class="f" style="position:absolute;left:2052.00px;top:333.57px;font-size:26.5px;line-height:26.5px;font-weight:400;-webkit-text-stroke:0.9px #ffffff;color:#ffffff;letter-spacing:1.359px;white-space:nowrap;">Create a new package</span>
<span class="f" style="position:absolute;left:544.60px;top:434.35px;font-size:20.5px;line-height:20.5px;font-weight:400;-webkit-text-stroke:0.6px #4c4c50;color:#4c4c50;letter-spacing:0.257px;white-space:nowrap;">Package ID</span>
<span class="f" style="position:absolute;left:676.50px;top:434.35px;font-size:20.5px;line-height:20.5px;font-weight:400;-webkit-text-stroke:0.6px #4c4c50;color:#4c4c50;letter-spacing:0.930px;white-space:nowrap;">Package name</span>
<span class="f" style="position:absolute;left:1078.00px;top:437.35px;font-size:20.5px;line-height:20.5px;font-weight:400;color:#545457;letter-spacing:0.040px;white-space:nowrap;">Base Price</span>
<span class="f" style="position:absolute;left:1254.00px;top:437.35px;font-size:20.5px;line-height:20.5px;font-weight:400;color:#545457;letter-spacing:0.429px;white-space:nowrap;">Duration</span>
<span class="f" style="position:absolute;left:1396.30px;top:437.35px;font-size:20.5px;line-height:20.5px;font-weight:400;color:#545457;letter-spacing:0.031px;white-space:nowrap;">People</span>
<span class="f" style="position:absolute;left:1524.30px;top:437.35px;font-size:20.5px;line-height:20.5px;font-weight:400;color:#545457;letter-spacing:0.534px;white-space:nowrap;">Last update</span>
<span class="f" style="position:absolute;left:1789.20px;top:437.35px;font-size:20.5px;line-height:20.5px;font-weight:400;color:#545457;letter-spacing:0.575px;white-space:nowrap;">Status</span>
<span class="f" style="position:absolute;left:544.60px;top:530.32px;font-size:22.3px;line-height:22.3px;font-weight:400;color:#1f1f1f;letter-spacing:-0.174px;white-space:nowrap;">#4312345</span>
<span class="f" style="position:absolute;left:780.00px;top:546.95px;font-size:22.5px;line-height:22.5px;font-weight:400;color:#5a5a5e;letter-spacing:1.827px;white-space:nowrap;">Entertainment</span>
<span class="f" style="position:absolute;left:1078.00px;top:530.51px;font-size:23.5px;line-height:23.5px;font-weight:400;-webkit-text-stroke:0.9px #1f1f1f;color:#1f1f1f;letter-spacing:-0.478px;white-space:nowrap;">$1,500</span>
<span class="f" style="position:absolute;left:1254.00px;top:530.71px;font-size:23.5px;line-height:23.5px;font-weight:400;color:#1f1f1f;letter-spacing:0.812px;white-space:nowrap;">8 nights</span>
<span style="position:absolute;left:1396.30px;top:530.71px;font-size:23.5px;line-height:23.5px;font-weight:400;color:#1f1f1f;letter-spacing:0.000px;white-space:nowrap;">2</span>
<span class="f" style="position:absolute;left:1524.30px;top:531.35px;font-size:22.5px;line-height:22.5px;font-weight:400;color:#1f1f1f;letter-spacing:-0.258px;white-space:nowrap;">07-24-2025, 12:32 PM</span>
<span class="f" style="position:absolute;left:1801.50px;top:533.85px;font-size:20.5px;line-height:20.5px;font-weight:400;color:#1f8c37;letter-spacing:-0.041px;white-space:nowrap;">Available</span>
<span class="f" style="position:absolute;left:544.60px;top:650.32px;font-size:22.3px;line-height:22.3px;font-weight:400;color:#1f1f1f;letter-spacing:0.198px;white-space:nowrap;">#567356</span>
<span class="f" style="position:absolute;left:780.00px;top:633.15px;font-size:22.5px;line-height:22.5px;font-weight:400;color:#1a1a1a;letter-spacing:1.659px;white-space:nowrap;">Nepal Adventure Tour</span>
<span class="f" style="position:absolute;left:780.00px;top:666.95px;font-size:22.5px;line-height:22.5px;font-weight:400;color:#5a5a5e;letter-spacing:1.365px;white-space:nowrap;">Education</span>
<span class="f" style="position:absolute;left:1078.00px;top:650.51px;font-size:23.5px;line-height:23.5px;font-weight:400;-webkit-text-stroke:0.9px #1f1f1f;color:#1f1f1f;letter-spacing:-0.478px;white-space:nowrap;">$1,500</span>
<span class="f" style="position:absolute;left:1254.00px;top:650.71px;font-size:23.5px;line-height:23.5px;font-weight:400;color:#1f1f1f;letter-spacing:0.812px;white-space:nowrap;">8 nights</span>
<span style="position:absolute;left:1396.30px;top:650.71px;font-size:23.5px;line-height:23.5px;font-weight:400;color:#1f1f1f;letter-spacing:0.000px;white-space:nowrap;">2</span>
<span class="f" style="position:absolute;left:1524.30px;top:651.35px;font-size:22.5px;line-height:22.5px;font-weight:400;color:#1f1f1f;letter-spacing:-0.258px;white-space:nowrap;">07-24-2025, 12:32 PM</span>
<span class="f" style="position:absolute;left:1801.50px;top:653.85px;font-size:20.5px;line-height:20.5px;font-weight:400;color:#6a5a22;letter-spacing:0.159px;white-space:nowrap;">On Discount</span>
<span class="f" style="position:absolute;left:544.60px;top:770.32px;font-size:22.3px;line-height:22.3px;font-weight:400;color:#1f1f1f;letter-spacing:0.865px;white-space:nowrap;">#445645</span>
<span class="f" style="position:absolute;left:780.00px;top:753.15px;font-size:22.5px;line-height:22.5px;font-weight:400;color:#1a1a1a;letter-spacing:0.777px;white-space:nowrap;">Winter Escape in Switz...</span>
<span class="f" style="position:absolute;left:780.00px;top:786.95px;font-size:22.5px;line-height:22.5px;font-weight:400;color:#5a5a5e;letter-spacing:1.323px;white-space:nowrap;">Family trip</span>
<span class="f" style="position:absolute;left:1078.00px;top:770.51px;font-size:23.5px;line-height:23.5px;font-weight:400;-webkit-text-stroke:0.9px #1f1f1f;color:#1f1f1f;letter-spacing:-0.478px;white-space:nowrap;">$1,500</span>
<span class="f" style="position:absolute;left:1254.00px;top:770.71px;font-size:23.5px;line-height:23.5px;font-weight:400;color:#1f1f1f;letter-spacing:0.812px;white-space:nowrap;">8 nights</span>
<span class="f" style="position:absolute;left:1396.30px;top:770.71px;font-size:23.5px;line-height:23.5px;font-weight:400;color:#1f1f1f;letter-spacing:-1.797px;white-space:nowrap;">+3</span>
<span class="f" style="position:absolute;left:1524.30px;top:771.35px;font-size:22.5px;line-height:22.5px;font-weight:400;color:#1f1f1f;letter-spacing:-0.258px;white-space:nowrap;">07-24-2025, 12:32 PM</span>
<span class="f" style="position:absolute;left:1801.50px;top:773.85px;font-size:20.5px;line-height:20.5px;font-weight:400;color:#6a5a22;letter-spacing:0.159px;white-space:nowrap;">On Discount</span>
<span class="f" style="position:absolute;left:544.60px;top:890.32px;font-size:22.3px;line-height:22.3px;font-weight:400;color:#1f1f1f;letter-spacing:0.031px;white-space:nowrap;">#763567</span>
<span class="f" style="position:absolute;left:780.00px;top:906.95px;font-size:22.5px;line-height:22.5px;font-weight:400;color:#5a5a5e;letter-spacing:0.892px;white-space:nowrap;">Men Fashion</span>
<span class="f" style="position:absolute;left:1078.00px;top:890.51px;font-size:23.5px;line-height:23.5px;font-weight:400;-webkit-text-stroke:0.9px #1f1f1f;color:#1f1f1f;letter-spacing:-0.478px;white-space:nowrap;">$1,500</span>
<span class="f" style="position:absolute;left:1254.00px;top:890.71px;font-size:23.5px;line-height:23.5px;font-weight:400;color:#1f1f1f;letter-spacing:0.812px;white-space:nowrap;">8 nights</span>
<span style="position:absolute;left:1396.30px;top:890.71px;font-size:23.5px;line-height:23.5px;font-weight:400;color:#1f1f1f;letter-spacing:0.000px;white-space:nowrap;">2</span>
<span class="f" style="position:absolute;left:1524.30px;top:891.35px;font-size:22.5px;line-height:22.5px;font-weight:400;color:#1f1f1f;letter-spacing:-0.258px;white-space:nowrap;">07-24-2025, 12:32 PM</span>
<span class="f" style="position:absolute;left:1801.50px;top:893.85px;font-size:20.5px;line-height:20.5px;font-weight:400;color:#1f8c37;letter-spacing:-0.041px;white-space:nowrap;">Available</span>
<span class="f" style="position:absolute;left:544.60px;top:1010.32px;font-size:22.3px;line-height:22.3px;font-weight:400;color:#1f1f1f;letter-spacing:-0.069px;white-space:nowrap;">#637355</span>
<span class="f" style="position:absolute;left:780.00px;top:1026.95px;font-size:22.5px;line-height:22.5px;font-weight:400;color:#5a5a5e;letter-spacing:1.827px;white-space:nowrap;">Entertainment</span>
<span class="f" style="position:absolute;left:1078.00px;top:1010.51px;font-size:23.5px;line-height:23.5px;font-weight:400;-webkit-text-stroke:0.9px #1f1f1f;color:#1f1f1f;letter-spacing:-0.478px;white-space:nowrap;">$1,500</span>
<span class="f" style="position:absolute;left:1254.00px;top:1010.71px;font-size:23.5px;line-height:23.5px;font-weight:400;color:#1f1f1f;letter-spacing:0.812px;white-space:nowrap;">8 nights</span>
<span style="position:absolute;left:1396.30px;top:1010.71px;font-size:23.5px;line-height:23.5px;font-weight:400;color:#1f1f1f;letter-spacing:0.000px;white-space:nowrap;">2</span>
<span class="f" style="position:absolute;left:1524.30px;top:1011.35px;font-size:22.5px;line-height:22.5px;font-weight:400;color:#1f1f1f;letter-spacing:-0.258px;white-space:nowrap;">07-24-2025, 12:32 PM</span>
<span class="f" style="position:absolute;left:1801.50px;top:1013.85px;font-size:20.5px;line-height:20.5px;font-weight:400;color:#333336;letter-spacing:0.157px;white-space:nowrap;">Not available</span>
<span class="f" style="position:absolute;left:544.60px;top:1130.32px;font-size:22.3px;line-height:22.3px;font-weight:400;color:#1f1f1f;letter-spacing:0.365px;white-space:nowrap;">#954673</span>
<span class="f" style="position:absolute;left:780.00px;top:1146.95px;font-size:22.5px;line-height:22.5px;font-weight:400;color:#5a5a5e;letter-spacing:1.245px;white-space:nowrap;">Medical</span>
<span class="f" style="position:absolute;left:1078.00px;top:1130.51px;font-size:23.5px;line-height:23.5px;font-weight:400;-webkit-text-stroke:0.9px #1f1f1f;color:#1f1f1f;letter-spacing:-0.478px;white-space:nowrap;">$1,500</span>
<span class="f" style="position:absolute;left:1254.00px;top:1130.71px;font-size:23.5px;line-height:23.5px;font-weight:400;color:#1f1f1f;letter-spacing:0.812px;white-space:nowrap;">8 nights</span>
<span style="position:absolute;left:1396.30px;top:1130.71px;font-size:23.5px;line-height:23.5px;font-weight:400;color:#1f1f1f;letter-spacing:0.000px;white-space:nowrap;">2</span>
<span class="f" style="position:absolute;left:1524.30px;top:1131.35px;font-size:22.5px;line-height:22.5px;font-weight:400;color:#1f1f1f;letter-spacing:-0.258px;white-space:nowrap;">07-24-2025, 12:32 PM</span>
<span class="f" style="position:absolute;left:1801.50px;top:1133.85px;font-size:20.5px;line-height:20.5px;font-weight:400;color:#1f8c37;letter-spacing:-0.041px;white-space:nowrap;">Available</span>
<span class="f" style="position:absolute;left:544.60px;top:1250.32px;font-size:22.3px;line-height:22.3px;font-weight:400;color:#1f1f1f;letter-spacing:-0.385px;white-space:nowrap;">#777533</span>
<span class="f" style="position:absolute;left:780.00px;top:1266.95px;font-size:22.5px;line-height:22.5px;font-weight:400;color:#5a5a5e;letter-spacing:1.827px;white-space:nowrap;">Entertainment</span>
<span class="f" style="position:absolute;left:1078.00px;top:1250.51px;font-size:23.5px;line-height:23.5px;font-weight:400;-webkit-text-stroke:0.9px #1f1f1f;color:#1f1f1f;letter-spacing:-0.478px;white-space:nowrap;">$1,500</span>
<span class="f" style="position:absolute;left:1254.00px;top:1250.71px;font-size:23.5px;line-height:23.5px;font-weight:400;color:#1f1f1f;letter-spacing:0.812px;white-space:nowrap;">8 nights</span>
<span style="position:absolute;left:1396.30px;top:1250.71px;font-size:23.5px;line-height:23.5px;font-weight:400;color:#1f1f1f;letter-spacing:0.000px;white-space:nowrap;">2</span>
<span class="f" style="position:absolute;left:1524.30px;top:1251.35px;font-size:22.5px;line-height:22.5px;font-weight:400;color:#1f1f1f;letter-spacing:-0.258px;white-space:nowrap;">07-24-2025, 12:32 PM</span>
<span class="f" style="position:absolute;left:1801.50px;top:1253.85px;font-size:20.5px;line-height:20.5px;font-weight:400;color:#1f8c37;letter-spacing:-0.041px;white-space:nowrap;">Available</span>
<span class="f" style="position:absolute;left:544.60px;top:1370.32px;font-size:22.3px;line-height:22.3px;font-weight:400;color:#1f1f1f;letter-spacing:-0.302px;white-space:nowrap;">#612345</span>
<span class="f" style="position:absolute;left:780.00px;top:1353.15px;font-size:22.5px;line-height:22.5px;font-weight:400;color:#1a1a1a;letter-spacing:0.955px;white-space:nowrap;">The Golden Georgia P...</span>
<span class="f" style="position:absolute;left:780.00px;top:1386.95px;font-size:22.5px;line-height:22.5px;font-weight:400;color:#5a5a5e;letter-spacing:1.827px;white-space:nowrap;">Entertainment</span>
<span class="f" style="position:absolute;left:1078.00px;top:1370.51px;font-size:23.5px;line-height:23.5px;font-weight:400;-webkit-text-stroke:0.9px #1f1f1f;color:#1f1f1f;letter-spacing:-0.478px;white-space:nowrap;">$1,500</span>
<span class="f" style="position:absolute;left:1254.00px;top:1370.71px;font-size:23.5px;line-height:23.5px;font-weight:400;color:#1f1f1f;letter-spacing:0.812px;white-space:nowrap;">8 nights</span>
<span style="position:absolute;left:1396.30px;top:1370.71px;font-size:23.5px;line-height:23.5px;font-weight:400;color:#1f1f1f;letter-spacing:0.000px;white-space:nowrap;">2</span>
<span class="f" style="position:absolute;left:1524.30px;top:1371.35px;font-size:22.5px;line-height:22.5px;font-weight:400;color:#1f1f1f;letter-spacing:-0.258px;white-space:nowrap;">07-24-2025, 12:32 PM</span>
<span class="f" style="position:absolute;left:1801.50px;top:1373.85px;font-size:20.5px;line-height:20.5px;font-weight:400;color:#1f8c37;letter-spacing:-0.041px;white-space:nowrap;">Available</span>
<span class="f" style="position:absolute;left:544.60px;top:1490.32px;font-size:22.3px;line-height:22.3px;font-weight:400;color:#1f1f1f;letter-spacing:0.365px;white-space:nowrap;">#245345</span>
<span class="f" style="position:absolute;left:780.00px;top:1506.95px;font-size:22.5px;line-height:22.5px;font-weight:400;color:#5a5a5e;letter-spacing:1.827px;white-space:nowrap;">Entertainment</span>
<span class="f" style="position:absolute;left:1078.00px;top:1490.51px;font-size:23.5px;line-height:23.5px;font-weight:400;-webkit-text-stroke:0.9px #1f1f1f;color:#1f1f1f;letter-spacing:-0.478px;white-space:nowrap;">$1,500</span>
<span class="f" style="position:absolute;left:1254.00px;top:1490.71px;font-size:23.5px;line-height:23.5px;font-weight:400;color:#1f1f1f;letter-spacing:0.812px;white-space:nowrap;">8 nights</span>
<span style="position:absolute;left:1396.30px;top:1490.71px;font-size:23.5px;line-height:23.5px;font-weight:400;color:#1f1f1f;letter-spacing:0.000px;white-space:nowrap;">2</span>
<span class="f" style="position:absolute;left:1524.30px;top:1491.35px;font-size:22.5px;line-height:22.5px;font-weight:400;color:#1f1f1f;letter-spacing:-0.258px;white-space:nowrap;">07-24-2025, 12:32 PM</span>
<span class="f" style="position:absolute;left:1801.50px;top:1493.85px;font-size:20.5px;line-height:20.5px;font-weight:400;color:#333336;letter-spacing:0.157px;white-space:nowrap;">Not available</span>
<span class="f" style="position:absolute;left:2098.00px;top:533.42px;font-size:21px;line-height:21px;font-weight:400;color:#2a2a2c;letter-spacing:-0.008px;white-space:nowrap;">View details</span>
<span class="f" style="position:absolute;left:2098.00px;top:653.42px;font-size:21px;line-height:21px;font-weight:400;color:#2a2a2c;letter-spacing:-0.008px;white-space:nowrap;">View details</span>
<span class="f" style="position:absolute;left:2098.00px;top:773.42px;font-size:21px;line-height:21px;font-weight:400;color:#2a2a2c;letter-spacing:-0.008px;white-space:nowrap;">View details</span>
<span class="f" style="position:absolute;left:2098.00px;top:893.42px;font-size:21px;line-height:21px;font-weight:400;color:#2a2a2c;letter-spacing:-0.008px;white-space:nowrap;">View details</span>
<span class="f" style="position:absolute;left:2098.00px;top:1013.42px;font-size:21px;line-height:21px;font-weight:400;color:#2a2a2c;letter-spacing:-0.008px;white-space:nowrap;">View details</span>
<span class="f" style="position:absolute;left:2098.00px;top:1133.42px;font-size:21px;line-height:21px;font-weight:400;color:#2a2a2c;letter-spacing:-0.008px;white-space:nowrap;">View details</span>
<span class="f" style="position:absolute;left:2098.00px;top:1253.42px;font-size:21px;line-height:21px;font-weight:400;color:#2a2a2c;letter-spacing:-0.008px;white-space:nowrap;">View details</span>
<span class="f" style="position:absolute;left:2098.00px;top:1373.42px;font-size:21px;line-height:21px;font-weight:400;color:#2a2a2c;letter-spacing:-0.008px;white-space:nowrap;">View details</span>
<span class="f" style="position:absolute;left:2098.00px;top:1493.42px;font-size:21px;line-height:21px;font-weight:400;color:#2a2a2c;letter-spacing:-0.008px;white-space:nowrap;">View details</span>
<span class="f" style="position:absolute;left:2084.70px;top:437.35px;font-size:20.5px;line-height:20.5px;font-weight:400;color:#545457;letter-spacing:0.603px;white-space:nowrap;">Action</span>
<span class="f" style="position:absolute;left:504.30px;top:1599.55px;font-size:22.5px;line-height:22.5px;font-weight:400;color:#1f1f1f;letter-spacing:1.061px;white-space:nowrap;">Show only</span>
<span style="position:absolute;left:652.90px;top:1599.75px;font-size:22.5px;line-height:22.5px;font-weight:400;color:#58585c;letter-spacing:0.000px;white-space:nowrap;">8</span>
<span class="f" style="position:absolute;left:699.40px;top:1599.55px;font-size:22.5px;line-height:22.5px;font-weight:400;color:#1f1f1f;letter-spacing:1.495px;white-space:nowrap;">rows</span>
<span style="position:absolute;left:1205.10px;top:1599.75px;font-size:22.5px;line-height:22.5px;font-weight:400;color:#333336;letter-spacing:0.000px;white-space:nowrap;transform:translateX(-50%)">1</span>
<span style="position:absolute;left:1270.30px;top:1599.75px;font-size:22.5px;line-height:22.5px;font-weight:400;color:#333336;letter-spacing:0.000px;white-space:nowrap;transform:translateX(-50%)">2</span>
<span style="position:absolute;left:1333.20px;top:1599.75px;font-size:22.5px;line-height:22.5px;font-weight:400;color:#333336;letter-spacing:0.000px;white-space:nowrap;transform:translateX(-50%)">3</span>
<span style="position:absolute;left:1397.40px;top:1599.75px;font-size:22.5px;line-height:22.5px;font-weight:400;color:#333336;letter-spacing:0.000px;white-space:nowrap;transform:translateX(-50%)">4</span>
<span style="position:absolute;left:1458.60px;top:1599.75px;font-size:22.5px;line-height:22.5px;font-weight:400;color:#333336;letter-spacing:0.000px;white-space:nowrap;transform:translateX(-50%)">...</span>
<span style="position:absolute;left:1522.00px;top:1599.75px;font-size:22.5px;line-height:22.5px;font-weight:400;color:#333336;letter-spacing:0.000px;white-space:nowrap;transform:translateX(-50%)">8</span>
<span style="position:absolute;left:1585.20px;top:1599.75px;font-size:22.5px;line-height:22.5px;font-weight:400;color:#333336;letter-spacing:0.000px;white-space:nowrap;transform:translateX(-50%)">9</span>
<span style="position:absolute;left:1648.00px;top:1599.75px;font-size:22.5px;line-height:22.5px;font-weight:400;color:#333336;letter-spacing:0.000px;white-space:nowrap;transform:translateX(-50%)">10</span>
<span class="f" style="position:absolute;left:2015.30px;top:1603.35px;font-size:22.5px;line-height:22.5px;font-weight:400;color:#555558;letter-spacing:0.350px;white-space:nowrap;">Previous</span>
<span class="f" style="position:absolute;left:2161.60px;top:1603.35px;font-size:22.5px;line-height:22.5px;font-weight:400;color:#555558;letter-spacing:1.578px;white-space:nowrap;">Next</span></div></div><script>(function(){var W=[130, 110, 105, 132, 200, 169, 57, 60, 96, 250.5, 91, 75, 171.4, 157.2, 264, 126.6, 190.5, 70, 291, 108.3, 147, 99.5, 80.5, 64, 112.5, 61, 98, 162, 69.5, 88, 219, 82.5, 88, 247.5, 111, 69.5, 88, 219, 114.4, 92, 267.5, 117, 69.5, 88, 25, 219, 114.4, 87, 139, 69.5, 88, 219, 82.5, 86.4, 162, 69.5, 88, 219, 120.4, 89, 85, 69.5, 88, 219, 82.5, 84.5, 162, 69.5, 88, 219, 82.5, 85, 262, 162, 69.5, 88, 219, 82.5, 89, 162, 69.5, 88, 219, 120.4, 111.6, 111.6, 111.6, 111.6, 111.6, 111.6, 111.6, 111.6, 111.6, 60, 112.3, 52, 90, 51];var e=document.querySelectorAll(".f");if(e.length!==W.length)return;for(var i=0;i<e.length;i++){var s=e[i];s.style.letterSpacing="0px";var w=s.getBoundingClientRect().width;var n=s.textContent.length;if(n>1){s.style.letterSpacing=((W[i]-w)/(n-1))+"px";}}})();</script></body></html>
